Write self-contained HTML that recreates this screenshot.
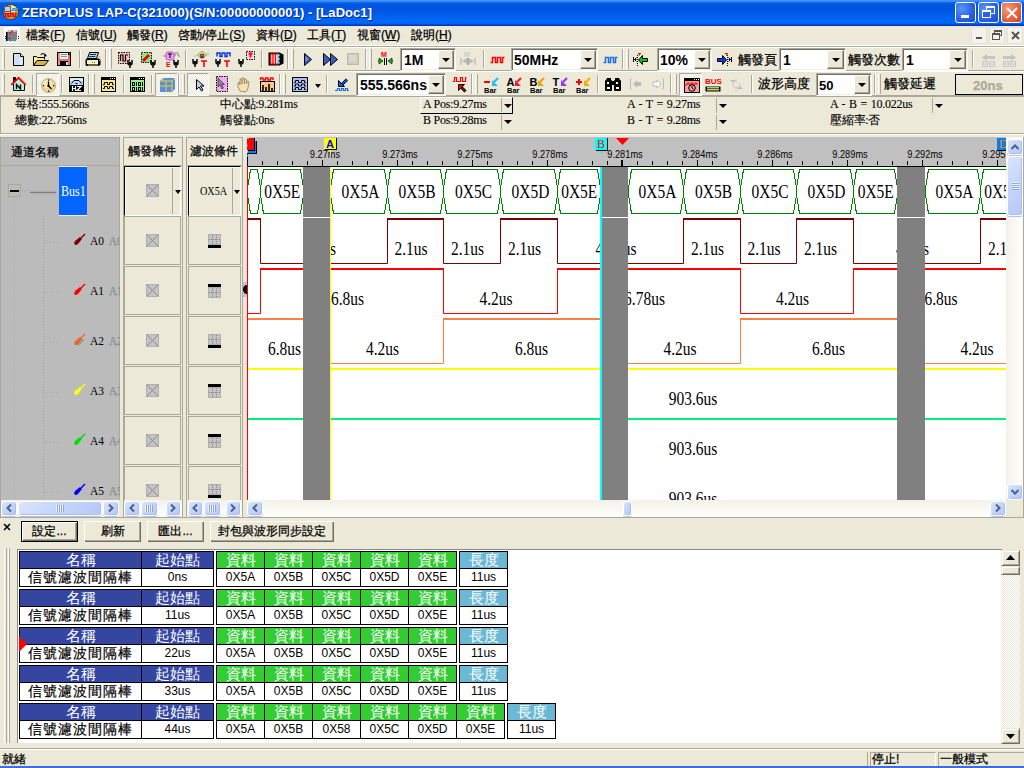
<!DOCTYPE html>
<html><head><meta charset="utf-8">
<style>
*{margin:0;padding:0;box-sizing:border-box}
html,body{width:1024px;height:768px;overflow:hidden;background:#ECE9D8}
body{font-family:"Liberation Sans",sans-serif;font-size:12px;color:#000;position:relative}
.a{position:absolute}
svg.a{overflow:visible}
.t{position:absolute;white-space:nowrap;line-height:1;-webkit-text-stroke:0.25px currentColor}
.sf{font-family:"Liberation Serif",serif}
.tbtn{position:absolute;top:2px;width:21px;height:21px;border:1px solid #fff;border-radius:3px;background:radial-gradient(circle at 30% 30%,#5a95f8,#2a5ee3 60%,#1c4ad0)}
.cbtn{position:absolute;background:#ECE9D8;border-top:1px solid #fff;border-left:1px solid #fff;border-right:1px solid #716f64;border-bottom:1px solid #716f64;box-shadow:inset -1px -1px 0 #aca899}
.cbtn:after{content:"";position:absolute;left:50%;top:50%;margin-left:-4px;margin-top:-2px;border-left:4px solid transparent;border-right:4px solid transparent;border-top:4px solid #000}
.sb{position:absolute;border:1px solid #fff;border-radius:2px;background:linear-gradient(135deg,#c8d8fd,#b4c8f6);box-shadow:inset -1px -1px 0 #a0b4e4}

</style></head><body>
<div class="a" style="left:0px;top:0px;width:1024px;height:26px;background:linear-gradient(#4a94f8 0px,#3a88f6 1.5px,#0a6cf2 2.5px,#0058e2 4px,#0054e0 8px,#005ae8 13px,#0064f2 18px,#0068f8 22px,#0062f0 23.5px,#0040c8 25px,#0030b0 26px)"></div>
<svg class="a" style="left:2px;top:4px;" width="17" height="16" viewBox="0 0 17 16"><ellipse cx="8.8" cy="8" rx="7.8" ry="7.5" fill="#d8a830" stroke="#303010" stroke-width=".8"/><ellipse cx="9.5" cy="5" rx="5" ry="3.5" fill="#f8e8a0"/><rect x="2" y="2" width="7" height="8" fill="#606060"/><rect x="3" y="3" width="5" height="4" fill="#c8c8f8"/><rect x="3" y="8" width="5" height="1" fill="#c0f0c0"/><path d="M9 6.5h2v-2h2v2h2v-2h1.5" stroke="#1090f0" stroke-width="1.2" fill="none"/><path d="M1 12.5h2.5v-3h2.5v3h2.5v-3h2.5v3h2.5v-3h1.5" stroke="#f00000" stroke-width="1.6" fill="none"/></svg>
<div class="t" style="left:22px;top:6px;font-size:13px;color:#fff;font-weight:bold;letter-spacing:0.05px;text-shadow:1px 1px 0 #0a2a90;-webkit-text-stroke:0">ZEROPLUS LAP-C(321000)(S/N:00000000001) - [LaDoc1]</div>
<div class="tbtn" style="left:955px"><div class="a" style="left:5px;top:12px;width:8px;height:3px;background:#fff"></div></div>
<div class="tbtn" style="left:978px"><div class="a" style="left:7px;top:3px;width:9px;height:8px;border:1px solid #fff;border-top-width:2px"></div><div class="a" style="left:3px;top:7px;width:9px;height:8px;border:1px solid #fff;border-top-width:2px;background:#2a60e4"></div></div>
<div class="tbtn" style="left:1001px;background:radial-gradient(circle at 30% 30%,#f49a78,#e4603a 60%,#cc4420)"><svg class="a" style="left:4px;top:4px" width="12" height="12"><path d="M1 1L11 11M11 1L1 11" stroke="#fff" stroke-width="2"/></svg></div>
<div class="a" style="left:0px;top:26px;width:1024px;height:19px;background:#ECE9D8"></div>
<div class="a" style="left:0px;top:45px;width:1024px;height:1px;background:#fff"></div>
<div class="a" style="left:0px;top:46px;width:1024px;height:1px;background:#aca899"></div>
<div class="a" style="left:0px;top:47px;width:1024px;height:1px;background:#fff"></div>
<div class="a" style="left:4px;top:27px;width:16px;height:16px;background:#fff"></div>
<svg class="a" style="left:4px;top:27px;" width="16" height="16" viewBox="0 0 16 16"><path d="M3 5l2-2h8v9l-1 2H3z" fill="#808080"/><path d="M5 3h8l-1 2H3z" fill="#c0c0c0"/><rect x="2" y="5" width="1.5" height="9" fill="#000"/><circle cx="6" cy="6" r="1" fill="#f00"/><circle cx="8" cy="4.5" r="1" fill="#f00"/><g fill="#00008b"><rect x="1" y="9" width="1" height="1"/><rect x="1" y="11" width="1" height="1"/><rect x="14" y="9" width="1" height="1"/><rect x="14" y="11" width="1" height="1"/><rect x="5" y="11" width="1" height="1"/></g><g fill="#0ff"><rect x="1" y="14" width="1" height="1"/><rect x="6" y="14" width="1" height="1"/><rect x="10" y="14" width="1" height="1"/><rect x="14" y="14" width="1" height="1"/></g></svg>
<div class="t" style="left:26px;top:29px;font-size:12px;color:#000;">檔案(<u>F</u>)</div>
<div class="t" style="left:76px;top:29px;font-size:12px;color:#000;">信號(<u>U</u>)</div>
<div class="t" style="left:127px;top:29px;font-size:12px;color:#000;">觸發(<u>R</u>)</div>
<div class="t" style="left:178px;top:29px;font-size:12px;color:#000;">啓動/停止(<u>S</u>)</div>
<div class="t" style="left:256px;top:29px;font-size:12px;color:#000;">資料(<u>D</u>)</div>
<div class="t" style="left:307px;top:29px;font-size:12px;color:#000;">工具(<u>T</u>)</div>
<div class="t" style="left:357px;top:29px;font-size:12px;color:#000;">視窗(<u>W</u>)</div>
<div class="t" style="left:411px;top:29px;font-size:12px;color:#000;">說明(<u>H</u>)</div>
<div class="a" style="left:971px;top:27px;width:16px;height:17px;background:#f4f2ea;border:1px solid #e6e3d6;border-radius:2px"></div>
<div class="a" style="left:989px;top:27px;width:16px;height:17px;background:#f4f2ea;border:1px solid #e6e3d6;border-radius:2px"></div>
<div class="a" style="left:1007px;top:27px;width:16px;height:17px;background:#f4f2ea;border:1px solid #e6e3d6;border-radius:2px"></div>
<div class="a" style="left:976px;top:37px;width:6px;height:2px;background:#555"></div>
<div class="a" style="left:994px;top:30px;width:8px;height:6px;border:1px solid #555;border-top-width:2px"></div>
<div class="a" style="left:992px;top:33px;width:8px;height:7px;border:1px solid #555;border-top-width:2px;background:#f4f2ea"></div>
<svg class="a" style="left:1011px;top:31px;" width="9" height="9" viewBox="0 0 9 9"><path d="M1 1L8 8M8 1L1 8" stroke="#555" stroke-width="2"/></svg>
<div class="a" style="left:0px;top:70px;width:1024px;height:1px;background:#aca899"></div>
<div class="a" style="left:0px;top:71px;width:1024px;height:1px;background:#fff"></div>
<div class="a" style="left:0px;top:95px;width:1024px;height:1px;background:#aca899"></div>
<div class="a" style="left:2px;top:49px;width:1px;height:20px;background:#fff"></div>
<div class="a" style="left:4px;top:49px;width:1px;height:20px;background:#aca899"></div>
<svg class="a" style="left:13px;top:53px;" width="11" height="13" viewBox="0 0 11 13"><path d="M0.5 0.5h7l3 3v9h-10z" fill="#dfe8fb" stroke="#000"/><path d="M1.5 1.5h5v10h-5z" fill="#c2d3f5" opacity=".6"/><path d="M7.5 0.5v3h3" fill="#fff" stroke="#000"/></svg>
<svg class="a" style="left:33px;top:52px;" width="16" height="14" viewBox="0 0 16 14"><path d="M0.5 13.5V4.5h3l1 1h7v3" fill="#f8e070" stroke="#000"/><path d="M1.5 12V6h2l1 1h7v1.5h-7z" fill="#fff4b0"/><path d="M0.5 13.5l3.5-5h11.5l-4 5z" fill="#cdb848" stroke="#000"/><path d="M7.5 2.5q2.5-2 5 0" stroke="#000" fill="none"/><path d="M11.5 1.5l2.5 2.5-3 1z" fill="#000"/></svg>
<svg class="a" style="left:57px;top:52px;" width="14" height="14" viewBox="0 0 14 14"><rect x="0" y="0" width="14" height="14" fill="#000"/><rect x="1" y="1" width="2" height="12" fill="#f09080"/><rect x="11" y="3" width="2" height="10" fill="#f07060"/><rect x="3" y="1" width="8" height="6" fill="#d8f0fc"/><path d="M4 2.5h6M4 4.5h6" stroke="#909090"/><rect x="1" y="7" width="12" height="2" fill="#f07060"/><rect x="3" y="9" width="8" height="4" fill="#000"/><rect x="9" y="10" width="2" height="3" fill="#b0e0f8"/><rect x="12" y="1" width="1" height="1" fill="#888"/></svg>
<div class="a" style="left:79px;top:50px;width:1px;height:18px;background:#aca899"></div>
<div class="a" style="left:80px;top:50px;width:1px;height:18px;background:#fff"></div>
<svg class="a" style="left:85px;top:52px;" width="16" height="14" viewBox="0 0 16 14"><path d="M4.5 0.5h9l-2 6h-9z" fill="#a8d8f8" stroke="#000"/><path d="M5 2.5h6M4.3 4.5h6" stroke="#000" stroke-width=".8"/><path d="M1.5 6.5h12.5l1.5 1.5v4.5l-1.5 1.5h-12.5l-1-1v-5z" fill="#000"/><rect x="2" y="8" width="11" height="2" fill="#f4ecc0"/><rect x="2" y="10" width="11" height="2" fill="#fff8d8"/><rect x="3" y="12.5" width="10" height="1" fill="#d8c870"/><rect x="7" y="10" width="1" height="1" fill="#0c0"/><rect x="9" y="10" width="1" height="1" fill="#f00"/><path d="M13.5 6l2-2M14 9l1.5-1.5" stroke="#c8b860"/></svg>
<div class="a" style="left:105px;top:49px;width:1px;height:20px;background:#aca899"></div>
<div class="a" style="left:106px;top:49px;width:1px;height:20px;background:#fff"></div>
<div class="a" style="left:109px;top:49px;width:1px;height:20px;background:#fff"></div>
<div class="a" style="left:111px;top:49px;width:1px;height:20px;background:#aca899"></div>
<svg class="a" style="left:118px;top:52px;" width="16" height="16" viewBox="0 0 16 16"><rect x="0.5" y="0.5" width="11" height="11" fill="#f8c0b8" stroke="#000" stroke-dasharray="1.5 1"/><path d="M2.5 9v-6h2.5v6h2.5v-6h2.5" stroke="#000" stroke-width="1.2" fill="none"/><path d="M10 8v3q0 2 2 2q2 0 2-2v-3M12 13v3" stroke="#000" stroke-width="1.5" fill="none"/><rect x="11" y="10" width="2" height="2" fill="#000"/></svg>
<svg class="a" style="left:141px;top:52px;" width="16" height="16" viewBox="0 0 16 16"><rect x="0.5" y="0.5" width="10" height="10" fill="#88e888" stroke="#000" stroke-dasharray="1.5 1"/><path d="M2 9l6-6" stroke="#f00" stroke-width="3"/><path d="M10 8v3q0 2 2 2q2 0 2-2v-3M12 13v3" stroke="#000" stroke-width="1.5" fill="none"/><rect x="11" y="10" width="2" height="2" fill="#000"/></svg>
<svg class="a" style="left:163px;top:51px;" width="17" height="17" viewBox="0 0 17 17"><path d="M0 5h3M11 5h1v-3h3v3h2" stroke="#888" fill="none"/><rect x="3" y="1" width="8" height="8" rx="2" fill="#e8a0f0" stroke="#c050d0"/><path d="M5 3h4M7 3v4" stroke="#000"/><text x="3" y="16" font-size="7" font-weight="bold" fill="#f00" font-family="Liberation Sans">E</text><path d="M11 9v3q0 2 2 2q2 0 2-2v-3M13 14v3" stroke="#000" stroke-width="1.5" fill="none"/><rect x="12" y="11" width="2" height="2" fill="#000"/></svg>
<div class="a" style="left:185px;top:50px;width:1px;height:18px;background:#aca899"></div>
<div class="a" style="left:186px;top:50px;width:1px;height:18px;background:#fff"></div>
<svg class="a" style="left:193px;top:51px;" width="16" height="17" viewBox="0 0 16 17"><path d="M4 4l5-4 5 4-5 4z" fill="#e8c860" stroke="#aaa"/><text x="7" y="7" font-size="6" font-weight="bold" font-family="Liberation Sans">B</text><path d="M1 5h2M14 3h2" stroke="#aaa"/><path d="M0 8v3q0 2 2 2q2 0 2-2v-3M2 13v3" stroke="#000" stroke-width="1.5" fill="none"/><rect x="1" y="10" width="2" height="2" fill="#000"/><path d="M8 10h6M11 10v6" stroke="#f00" stroke-width="1.6"/></svg>
<svg class="a" style="left:216px;top:51px;" width="16" height="17" viewBox="0 0 16 17"><path d="M1 5.5V2H4V5.5H6V2H9V5.5H11V2H14V5.5" stroke="#0030f0" stroke-width="1.4" fill="none"/><path d="M0 8v3q0 2 2 2q2 0 2-2v-3M2 13v3" stroke="#000" stroke-width="1.5" fill="none"/><rect x="1" y="10" width="2" height="2" fill="#000"/><path d="M8 10h6M11 10v6" stroke="#f00" stroke-width="1.6"/></svg>
<svg class="a" style="left:239px;top:51px;" width="16" height="17" viewBox="0 0 16 17"><rect x="7.5" y="0.5" width="8" height="8" fill="#fdd" stroke="#000" stroke-dasharray="1.5 1"/><path d="M9.5 2.5h4M11.5 2.5v4" stroke="#f00" stroke-width="2"/><path d="M0 8v3q0 2 2 2q2 0 2-2v-3M2 13v3" stroke="#000" stroke-width="1.5" fill="none"/><rect x="1" y="10" width="2" height="2" fill="#000"/></svg>
<div class="a" style="left:261px;top:50px;width:1px;height:18px;background:#aca899"></div>
<div class="a" style="left:262px;top:50px;width:1px;height:18px;background:#fff"></div>
<svg class="a" style="left:268px;top:51px;" width="16" height="16" viewBox="0 0 16 16"><path d="M0.5 1.5h11l4 2v9l-4 2h-11z" fill="#000"/><rect x="2" y="3" width="8" height="10" fill="#fff"/><path d="M2.5 3v10M5 3v10M7.5 3v10" stroke="#f00" stroke-width="1.4"/><path d="M2 3h8M2 13h8" stroke="#f00"/><path d="M9 3q2 0 3 1l-1.5 2 1.5 2-1.5 2 1.5 2q-1 1-3 1" fill="#b0d0f0" stroke="#5080b0"/></svg>
<div class="a" style="left:287px;top:49px;width:1px;height:20px;background:#aca899"></div>
<div class="a" style="left:288px;top:49px;width:1px;height:20px;background:#fff"></div>
<div class="a" style="left:291px;top:49px;width:1px;height:20px;background:#fff"></div>
<div class="a" style="left:293px;top:49px;width:1px;height:20px;background:#aca899"></div>
<svg class="a" style="left:304px;top:53px;" width="8" height="13" viewBox="0 0 8 13"><path d="M0.5 0.5l7 6-7 6z" fill="#3c5cb8" stroke="#000"/><path d="M1.5 3l3 3.5-3 2z" fill="#7b9be0"/></svg>
<svg class="a" style="left:323px;top:53px;" width="16" height="13" viewBox="0 0 16 13"><path d="M0.5 0.5l7 6-7 6z" fill="#3c5cb8" stroke="#000"/><path d="M7.5 0.5l7 6-7 6z" fill="#3c5cb8" stroke="#000"/></svg>
<svg class="a" style="left:347px;top:53px;" width="12" height="12" viewBox="0 0 12 12"><rect x="0.5" y="0.5" width="11" height="11" fill="#cfcdc0" stroke="#bbb8a8"/><rect x="2" y="2" width="7" height="7" fill="#dad8cc"/></svg>
<div class="a" style="left:365px;top:49px;width:1px;height:20px;background:#aca899"></div>
<div class="a" style="left:366px;top:49px;width:1px;height:20px;background:#fff"></div>
<div class="a" style="left:369px;top:49px;width:1px;height:20px;background:#fff"></div>
<div class="a" style="left:371px;top:49px;width:1px;height:20px;background:#aca899"></div>
<svg class="a" style="left:377px;top:51px;" width="17" height="15" viewBox="0 0 17 15"><text x="4" y="6" font-size="7" font-weight="bold" fill="#f00" font-family="Liberation Sans">M</text><path d="M1 10h4M12 10h4" stroke="#000"/><path d="M6 10l-4-3v6z" fill="#0c0" stroke="#000" stroke-width=".6"/><path d="M11 10l4-3v6z" fill="#0c0" stroke="#000" stroke-width=".6"/><path d="M7.5 7v7M9.5 7v7" stroke="#000"/></svg>
<div class="a" style="left:400px;top:48px;width:56px;height:23px;background:#fff;border-top:1px solid #aca899;border-left:1px solid #aca899;border-right:1px solid #fff;border-bottom:1px solid #fff;box-shadow:inset 1px 1px 0 #716f64,inset -1px -1px 0 #f1efe2"></div>
<div class="cbtn" style="left:438px;top:50px;width:16px;height:19px"></div>
<div class="t" style="left:404px;top:53px;font-size:14px;color:#000;font-weight:bold;-webkit-text-stroke:0">1M</div>
<svg class="a" style="left:460px;top:51px;" width="16" height="15" viewBox="0 0 16 15"><text x="4" y="6" font-size="7" fill="#bbb" font-family="Liberation Sans">M</text><path d="M1 7v7M15 7v7" stroke="#aaa"/><path d="M2 10l5-3v6zM14 10l-5-3v6z" fill="#bbb"/><path d="M7.5 7v7M8.5 7v7" stroke="#aaa"/></svg>
<div class="a" style="left:483px;top:50px;width:1px;height:18px;background:#aca899"></div>
<div class="a" style="left:484px;top:50px;width:1px;height:18px;background:#fff"></div>
<svg class="a" style="left:490px;top:56px;" width="16" height="7" viewBox="0 0 16 7"><path d="M0.5 6.5h2v-5h3v5h2v-5h3v5h2v-5h2" stroke="#f00" stroke-width="1.5" fill="none"/></svg>
<div class="a" style="left:511px;top:48px;width:87px;height:23px;background:#fff;border-top:1px solid #aca899;border-left:1px solid #aca899;border-right:1px solid #fff;border-bottom:1px solid #fff;box-shadow:inset 1px 1px 0 #716f64,inset -1px -1px 0 #f1efe2"></div>
<div class="cbtn" style="left:580px;top:50px;width:16px;height:19px"></div>
<div class="t" style="left:514px;top:53px;font-size:14px;color:#000;font-weight:bold;-webkit-text-stroke:0">50MHz</div>
<svg class="a" style="left:603px;top:56px;" width="16" height="7" viewBox="0 0 16 7"><path d="M0.5 6.5h2v-5h3v5h2v-5h3v5h2v-5h2" stroke="#1a70f0" stroke-width="1.5" fill="none"/></svg>
<div class="a" style="left:622px;top:49px;width:1px;height:20px;background:#aca899"></div>
<div class="a" style="left:623px;top:49px;width:1px;height:20px;background:#fff"></div>
<div class="a" style="left:626px;top:49px;width:1px;height:20px;background:#fff"></div>
<div class="a" style="left:628px;top:49px;width:1px;height:20px;background:#aca899"></div>
<svg class="a" style="left:633px;top:52px;" width="16" height="14" viewBox="0 0 16 14"><path d="M4.5 3v11" stroke="#000" stroke-dasharray="1 1"/><path d="M5 1.5h3M6.5 1.5v2" stroke="#f00" stroke-width="1.2"/><path d="M0.5 5v5M0.5 7.5h3M3.5 5.5l-2 2 2 2" stroke="#000" fill="none"/><path d="M14.5 6.5h-5v-3l-4 4.5 4 4.5v-3h5z" fill="#00d000" stroke="#000"/></svg>
<div class="a" style="left:657px;top:48px;width:55px;height:23px;background:#fff;border-top:1px solid #aca899;border-left:1px solid #aca899;border-right:1px solid #fff;border-bottom:1px solid #fff;box-shadow:inset 1px 1px 0 #716f64,inset -1px -1px 0 #f1efe2"></div>
<div class="cbtn" style="left:694px;top:50px;width:16px;height:19px"></div>
<div class="t" style="left:660px;top:53px;font-size:14px;color:#000;font-weight:bold;-webkit-text-stroke:0">10%</div>
<svg class="a" style="left:717px;top:52px;" width="16" height="14" viewBox="0 0 16 14"><path d="M10.5 3v11" stroke="#000" stroke-dasharray="1 1"/><path d="M8 1.5h3M9.5 1.5v2" stroke="#f00" stroke-width="1.2"/><path d="M14.5 5v5M14.5 7.5h-3M11.5 5.5l2 2-2 2" stroke="#000" fill="none"/><path d="M0.5 6.5h5v-3l4 4.5-4 4.5v-3h-5z" fill="#0040ff" stroke="#000"/></svg>
<div class="t" style="left:738px;top:53px;font-size:13px;color:#000;">觸發頁</div>
<div class="a" style="left:779px;top:48px;width:67px;height:23px;background:#fff;border-top:1px solid #aca899;border-left:1px solid #aca899;border-right:1px solid #fff;border-bottom:1px solid #fff;box-shadow:inset 1px 1px 0 #716f64,inset -1px -1px 0 #f1efe2"></div>
<div class="cbtn" style="left:827px;top:50px;width:17px;height:19px"></div>
<div class="t" style="left:783px;top:53px;font-size:14px;color:#000;font-weight:bold;-webkit-text-stroke:0">1</div>
<div class="t" style="left:848px;top:53px;font-size:13px;color:#000;">觸發次數</div>
<div class="a" style="left:902px;top:48px;width:66px;height:23px;background:#fff;border-top:1px solid #aca899;border-left:1px solid #aca899;border-right:1px solid #fff;border-bottom:1px solid #fff;box-shadow:inset 1px 1px 0 #716f64,inset -1px -1px 0 #f1efe2"></div>
<div class="cbtn" style="left:949px;top:50px;width:17px;height:19px"></div>
<div class="t" style="left:906px;top:53px;font-size:14px;color:#000;font-weight:bold;-webkit-text-stroke:0">1</div>
<div class="a" style="left:972px;top:50px;width:1px;height:18px;background:#aca899"></div>
<div class="a" style="left:973px;top:50px;width:1px;height:18px;background:#fff"></div>
<svg class="a" style="left:981px;top:54px;" width="15" height="13" viewBox="0 0 15 13"><g ><path d="M1 3.5l5-3.5v2h8v3h-8v2z" fill="#c4c4c4"/><path d="M1.5 7.5h5v5h-5zM8.5 7.5h5v5h-5zM1.5 10h5M8.5 10h5" fill="none" stroke="#c4c4c4"/></g></svg>
<svg class="a" style="left:1002px;top:54px;" width="15" height="13" viewBox="0 0 15 13"><g transform="translate(15,0) scale(-1,1)"><path d="M1 3.5l5-3.5v2h8v3h-8v2z" fill="#c4c4c4"/><path d="M1.5 7.5h5v5h-5zM8.5 7.5h5v5h-5zM1.5 10h5M8.5 10h5" fill="none" stroke="#c4c4c4"/></g></svg>
<div class="a" style="left:2px;top:74px;width:1px;height:20px;background:#fff"></div>
<div class="a" style="left:4px;top:74px;width:1px;height:20px;background:#aca899"></div>
<svg class="a" style="left:11px;top:77px;" width="15" height="14" viewBox="0 0 15 14"><path d="M2.5 7V0.5H4.5V4" fill="#000" stroke="#000"/><path d="M2.5 6v7.5h11V6.5L8 1z" fill="#a8f4e0" stroke="#000"/><path d="M0.3 7.8L7.5 0.8L14.7 7.8" stroke="#f00" stroke-width="1.7" fill="none"/><path d="M5.5 12V7.5l4 4.5V7.5" stroke="#000" stroke-width="1.4" fill="none"/></svg>
<div class="a" style="left:32px;top:75px;width:1px;height:18px;background:#aca899"></div>
<div class="a" style="left:33px;top:75px;width:1px;height:18px;background:#fff"></div>
<div class="a" style="left:36px;top:73px;width:23px;height:23px;background:repeating-conic-gradient(#ece9d8 0 25%,#fefefe 0 50%) 0 0/2px 2px;border-top:1px solid #aca899;border-left:1px solid #aca899;border-bottom:1px solid #fff;border-right:1px solid #fff"></div>
<svg class="a" style="left:41px;top:78px;" width="15" height="15" viewBox="0 0 15 15"><circle cx="7.5" cy="7.5" r="7" fill="#f0d490" stroke="#b0a070" stroke-width=".8"/><ellipse cx="6.5" cy="6" rx="5" ry="4" fill="#f8ecc8" opacity=".8"/><path d="M7.5 3.5v4.5M7.5 8l3 3" stroke="#000" stroke-width="1.3" fill="none"/><rect x="6.5" y="7" width="2" height="2" fill="#000"/><rect x="7" y="1.5" width="1.2" height="1.2" fill="#000"/><rect x="7" y="12.5" width="1.2" height="1.2" fill="#000"/><rect x="2" y="7" width="1.2" height="1.2" fill="#000"/><rect x="12" y="7" width="1.2" height="1.2" fill="#000"/></svg>
<div class="a" style="left:61px;top:75px;width:1px;height:18px;background:#aca899"></div>
<div class="a" style="left:62px;top:75px;width:1px;height:18px;background:#fff"></div>
<svg class="a" style="left:69px;top:77px;" width="15" height="15" viewBox="0 0 15 15"><rect x="0" y="0" width="15" height="15" fill="#000"/><rect x="1" y="1" width="13" height="7" fill="#b8d8f8"/><rect x="1" y="1" width="13" height="3" fill="#d8ecfc"/><path d="M2.5 6.5L5 3.5H10L12.5 6.5" stroke="#000" fill="none"/><rect x="6.5" y="6" width="2" height="1" fill="#000"/><path d="M3.5 9v5M6.5 9v5M3.5 11.5h3M8 9.5h4l-4 4h4" stroke="#fff" stroke-width="1.2" fill="none"/></svg>
<div class="a" style="left:88px;top:74px;width:1px;height:20px;background:#aca899"></div>
<div class="a" style="left:89px;top:74px;width:1px;height:20px;background:#fff"></div>
<div class="a" style="left:92px;top:74px;width:1px;height:20px;background:#fff"></div>
<div class="a" style="left:94px;top:74px;width:1px;height:20px;background:#aca899"></div>
<svg class="a" style="left:101px;top:77px;" width="15" height="15" viewBox="0 0 15 15"><rect x="0.5" y="0.5" width="14" height="14" fill="#f8e490" stroke="#000"/><rect x="0" y="0" width="15" height="3" fill="#000"/><rect x="9" y="1" width="1" height="1" fill="#fff"/><rect x="11" y="1" width="1" height="1" fill="#fff"/><rect x="13" y="1" width="1" height="1" fill="#fff"/><path d="M2 7.5H3.5V5.5H6.5V7.5H8.5V5.5H11.5V7.5H13M2 11.5H3.5V9.5H6.5V11.5H8.5V9.5H11.5V11.5H13" stroke="#000" stroke-width="1" fill="none"/></svg>
<div class="a" style="left:123px;top:75px;width:1px;height:18px;background:#aca899"></div>
<div class="a" style="left:124px;top:75px;width:1px;height:18px;background:#fff"></div>
<svg class="a" style="left:130px;top:77px;" width="15" height="15" viewBox="0 0 15 15"><rect x="0.5" y="0.5" width="14" height="14" fill="#98f090" stroke="#000"/><rect x="0" y="0" width="15" height="3" fill="#000"/><rect x="9" y="1" width="1" height="1" fill="#fff"/><rect x="11" y="1" width="1" height="1" fill="#fff"/><rect x="13" y="1" width="1" height="1" fill="#fff"/><rect x="2.5" y="5.5" width="2" height="3" fill="none" stroke="#000"/><rect x="6" y="5" width="1" height="4" fill="#000"/><rect x="8.5" y="5.5" width="2" height="3" fill="none" stroke="#000"/><rect x="12" y="5" width="1" height="4" fill="#000"/><rect x="2.5" y="10.5" width="2" height="3" fill="none" stroke="#000"/><rect x="6" y="10" width="1" height="4" fill="#000"/><rect x="8.5" y="10.5" width="2" height="3" fill="none" stroke="#000"/><rect x="12" y="10" width="1" height="4" fill="#000"/></svg>
<div class="a" style="left:151px;top:75px;width:1px;height:18px;background:#aca899"></div>
<div class="a" style="left:152px;top:75px;width:1px;height:18px;background:#fff"></div>
<div class="a" style="left:155px;top:73px;width:23px;height:23px;background:repeating-conic-gradient(#ece9d8 0 25%,#fefefe 0 50%) 0 0/2px 2px;border-top:1px solid #aca899;border-left:1px solid #aca899;border-bottom:1px solid #fff;border-right:1px solid #fff"></div>
<svg class="a" style="left:160px;top:78px;" width="15" height="15" viewBox="0 0 15 15"><path d="M0 3l3-3h12v11l-3 3h-12z" fill="#5890e0"/><path d="M0 3h12v12M3 0v3M0 8h12M6 3v12M12 3l3-3" stroke="#f0d020" fill="none"/></svg>
<div class="a" style="left:178px;top:74px;width:1px;height:20px;background:#aca899"></div>
<div class="a" style="left:179px;top:74px;width:1px;height:20px;background:#fff"></div>
<div class="a" style="left:182px;top:74px;width:1px;height:20px;background:#fff"></div>
<div class="a" style="left:184px;top:74px;width:1px;height:20px;background:#aca899"></div>
<div class="a" style="left:187px;top:73px;width:22px;height:23px;background:repeating-conic-gradient(#ece9d8 0 25%,#fefefe 0 50%) 0 0/2px 2px;border-top:1px solid #aca899;border-left:1px solid #aca899;border-bottom:1px solid #fff;border-right:1px solid #fff"></div>
<svg class="a" style="left:196px;top:79px;" width="8" height="13" viewBox="0 0 8 13"><path d="M0.5 0.5v10l2.5-2.5 2.5 4 1.5-1-2.5-4h3.5z" fill="#c0d0f8" stroke="#000"/></svg>
<svg class="a" style="left:216px;top:76px;" width="12" height="16" viewBox="0 0 12 16"><rect x="0.5" y="0.5" width="11" height="15" fill="#f8a8f8" stroke="#000" stroke-dasharray="1.5 1"/><path d="M2 2v9l2-2 2 4 1.5-1-2-3.5h3z" fill="#888" stroke="#222" stroke-width=".6"/></svg>
<svg class="a" style="left:237px;top:77px;" width="16" height="15" viewBox="0 0 16 15"><path d="M3 14q-3-4-2-8l1-1 1 3v-6h1.5l.5 5v-6h2l.5 6v-5h1.5l.5 5 1-3 1.5 1-1 6q-1 4-3 4z" fill="#f8e0b0" stroke="#a09070"/></svg>
<svg class="a" style="left:260px;top:77px;" width="15" height="15" viewBox="0 0 15 15"><path d="M0.5 3v-2h2.5v2h2.5v-2h2.5v2h2.5v-2h2.5v2" stroke="#f00" stroke-width="1.4" fill="none"/><rect x="0.5" y="4.5" width="14" height="10" fill="#f8c890" stroke="#000"/><path d="M3 14v-6M6 14v-4M9 14v-7M12 14v-3" stroke="#000" stroke-width="1.6"/></svg>
<div class="a" style="left:279px;top:74px;width:1px;height:20px;background:#aca899"></div>
<div class="a" style="left:280px;top:74px;width:1px;height:20px;background:#fff"></div>
<div class="a" style="left:283px;top:74px;width:1px;height:20px;background:#fff"></div>
<div class="a" style="left:285px;top:74px;width:1px;height:20px;background:#aca899"></div>
<svg class="a" style="left:292px;top:77px;" width="16" height="15" viewBox="0 0 16 15"><rect x="0.5" y="0.5" width="15" height="14" fill="#a8c0f8" stroke="#000"/><path d="M2 5.5H3.5V3.5H6.5V5.5H9.5V3.5H12.5V5.5H14M2 9H3.5V7H6.5V9H9.5V7H12.5V9H14M2 12.5H3.5V10.5H6.5V12.5H9.5V10.5H12.5V12.5H14" stroke="#000" stroke-width="1" fill="none"/></svg>
<svg class="a" style="left:315px;top:84px;" width="6" height="4" viewBox="0 0 6 4"><path d="M0 0h6l-3 4z"/></svg>
<div class="a" style="left:326px;top:75px;width:1px;height:18px;background:#aca899"></div>
<div class="a" style="left:327px;top:75px;width:1px;height:18px;background:#fff"></div>
<svg class="a" style="left:334px;top:78px;" width="15" height="13" viewBox="0 0 15 13"><path d="M1 12.5H3.5V10.5H5.5V12.5H7.5V10.5H9.5V12.5H11.5V10.5H13.5V12.5H15" stroke="#1a70f0" stroke-width="1.2" fill="none"/><path d="M13 1.5l-5 5" stroke="#000" stroke-width="3"/><path d="M13 1.5l-5 5" stroke="#1060f0" stroke-width="1.4"/><path d="M4.5 2.5v6h6z" fill="#1060f0" stroke="#000"/></svg>
<div class="a" style="left:356px;top:73px;width:90px;height:23px;background:#fff;border-top:1px solid #aca899;border-left:1px solid #aca899;border-right:1px solid #fff;border-bottom:1px solid #fff;box-shadow:inset 1px 1px 0 #716f64,inset -1px -1px 0 #f1efe2"></div>
<div class="cbtn" style="left:428px;top:75px;width:16px;height:19px"></div>
<div class="t" style="left:360px;top:78px;font-size:14px;color:#000;font-weight:bold;-webkit-text-stroke:0">555.566ns</div>
<svg class="a" style="left:452px;top:76px;" width="15" height="16" viewBox="0 0 15 16"><path d="M0.5 5.5H2.5V1.5H4.5V5.5H8.5V1.5H10.5V5.5H13.5V1.5H14.5" stroke="#f00" stroke-width="1.2" fill="none"/><path d="M9.5 11.5l4 4" stroke="#000" stroke-width="3"/><path d="M9.5 11.5l3.5 3.5" stroke="#f00" stroke-width="1"/><path d="M6.5 8.5h6l-6 6z" fill="#f00" stroke="#000"/></svg>
<div class="a" style="left:471px;top:74px;width:1px;height:20px;background:#aca899"></div>
<div class="a" style="left:472px;top:74px;width:1px;height:20px;background:#fff"></div>
<div class="a" style="left:475px;top:74px;width:1px;height:20px;background:#fff"></div>
<div class="a" style="left:477px;top:74px;width:1px;height:20px;background:#aca899"></div>
<svg class="a" style="left:484px;top:77px;" width="15" height="16" viewBox="0 0 15 16"><path d="M0 5h6" stroke="#f00" stroke-width="2"/><path d="M14 1L10 5" stroke="#20c0f0" stroke-width="2.2"/><path d="M8 3v6h6z" fill="#20c0f0"/><text x="0" y="15.5" font-size="7.5" font-weight="bold" font-family="Liberation Sans" fill="#000" transform="scale(1 1)">Bar</text></svg>
<svg class="a" style="left:507px;top:77px;" width="15" height="16" viewBox="0 0 15 16"><text x="-0.5" y="9" font-size="11" font-weight="bold" font-family="Liberation Sans">A</text><path d="M14 1L10 5" stroke="#f02020" stroke-width="2.2"/><path d="M8 3v6h6z" fill="#f02020"/><text x="0" y="15.5" font-size="7.5" font-weight="bold" font-family="Liberation Sans" fill="#000" transform="scale(1 1)">Bar</text></svg>
<svg class="a" style="left:530px;top:77px;" width="15" height="16" viewBox="0 0 15 16"><text x="-0.5" y="9" font-size="11" font-weight="bold" font-family="Liberation Sans">B</text><path d="M14 1L10 5" stroke="#f0a000" stroke-width="2.2"/><path d="M8 3v6h6z" fill="#f0a000"/><text x="0" y="15.5" font-size="7.5" font-weight="bold" font-family="Liberation Sans" fill="#000" transform="scale(1 1)">Bar</text></svg>
<svg class="a" style="left:553px;top:77px;" width="15" height="16" viewBox="0 0 15 16"><text x="-0.5" y="9" font-size="11" font-weight="bold" font-family="Liberation Sans">T</text><path d="M14 1L10 5" stroke="#a030f0" stroke-width="2.2"/><path d="M8 3v6h6z" fill="#a030f0"/><text x="0" y="15.5" font-size="7.5" font-weight="bold" font-family="Liberation Sans" fill="#000" transform="scale(1 1)">Bar</text></svg>
<svg class="a" style="left:576px;top:77px;" width="15" height="16" viewBox="0 0 15 16"><path d="M0 5h6M3 2v6" stroke="#f00" stroke-width="2"/><path d="M14 1L10 5" stroke="#f0b000" stroke-width="2.2"/><path d="M8 3v6h6z" fill="#f0b000"/><text x="0" y="15.5" font-size="7.5" font-weight="bold" font-family="Liberation Sans" fill="#000" transform="scale(1 1)">Bar</text></svg>
<div class="a" style="left:597px;top:75px;width:1px;height:18px;background:#aca899"></div>
<div class="a" style="left:598px;top:75px;width:1px;height:18px;background:#fff"></div>
<svg class="a" style="left:605px;top:77px;" width="16" height="14" viewBox="0 0 16 14"><path d="M1 3h5v-2h-4zM10 1h4l1 2h-5z" fill="#000"/><rect x="0" y="3" width="7" height="11" rx="1" fill="#000"/><rect x="9" y="3" width="7" height="11" rx="1" fill="#000"/><rect x="6" y="4" width="4" height="4" fill="#000"/><rect x="2" y="5" width="2" height="2" fill="#fff"/><rect x="11" y="5" width="2" height="2" fill="#fff"/><rect x="2" y="10" width="3" height="2" fill="#fff"/><rect x="11" y="10" width="3" height="2" fill="#fff"/></svg>
<svg class="a" style="left:629px;top:78px;" width="13" height="12" viewBox="0 0 13 12"><path d="M2.5 1h-1v10h1" stroke="#bbb" fill="none"/><path d="M4 6l4-4v2h4v4h-4v2z" fill="#bbb"/></svg>
<svg class="a" style="left:652px;top:78px;" width="13" height="12" viewBox="0 0 13 12"><path d="M10.5 1h1v10h-1" stroke="#bbb" fill="none"/><path d="M9 6l-4-4v2h-4v4h4v2z" fill="#fff" stroke="#bbb"/></svg>
<div class="a" style="left:670px;top:74px;width:1px;height:20px;background:#aca899"></div>
<div class="a" style="left:671px;top:74px;width:1px;height:20px;background:#fff"></div>
<div class="a" style="left:674px;top:74px;width:1px;height:20px;background:#fff"></div>
<div class="a" style="left:676px;top:74px;width:1px;height:20px;background:#aca899"></div>
<div class="a" style="left:679px;top:73px;width:23px;height:23px;background:repeating-conic-gradient(#ece9d8 0 25%,#fefefe 0 50%) 0 0/2px 2px;border-top:1px solid #aca899;border-left:1px solid #aca899;border-bottom:1px solid #fff;border-right:1px solid #fff"></div>
<svg class="a" style="left:684px;top:78px;" width="16" height="15" viewBox="0 0 16 15"><rect x="0.5" y="0.5" width="15" height="14" fill="#f8a0a0" stroke="#000"/><rect x="0" y="0" width="16" height="3" fill="#000"/><path d="M10 1.5h1M12 1.5h1M14 1.5h1" stroke="#fff"/><path d="M1 7h2v-2h2v2h2v-2h2v2h2v-2h2v2" stroke="#f00" fill="none"/><circle cx="8" cy="10" r="3.3" fill="none" stroke="#000"/><path d="M8 8v2l1.5 1" stroke="#000" fill="none"/></svg>
<svg class="a" style="left:705px;top:77px;" width="16" height="15" viewBox="0 0 16 15"><text x="0" y="7" font-size="8" font-weight="bold" fill="#f00" font-family="Liberation Sans">BUS</text><rect x="0.5" y="9.5" width="15" height="5" fill="#000"/><rect x="2" y="10" width="12" height="1.5" fill="#80e080"/><rect x="2" y="12" width="12" height="1.5" fill="#f0c040"/></svg>
<svg class="a" style="left:730px;top:78px;" width="13" height="14" viewBox="0 0 13 14"><path d="M3 5l-3-3h6z" fill="#bbb"/><path d="M10 8l-3 3h6z" fill="#bbb"/><path d="M3 5v4h7v-4M6 0v5M6 9v5" stroke="#ccc" fill="none"/></svg>
<div class="a" style="left:751px;top:75px;width:1px;height:18px;background:#aca899"></div>
<div class="a" style="left:752px;top:75px;width:1px;height:18px;background:#fff"></div>
<div class="t" style="left:758px;top:77px;font-size:13px;color:#000;">波形高度</div>
<div class="a" style="left:816px;top:73px;width:56px;height:23px;background:#fff;border-top:1px solid #aca899;border-left:1px solid #aca899;border-right:1px solid #fff;border-bottom:1px solid #fff;box-shadow:inset 1px 1px 0 #716f64,inset -1px -1px 0 #f1efe2"></div>
<div class="cbtn" style="left:854px;top:75px;width:16px;height:19px"></div>
<div class="t" style="left:819px;top:79px;font-size:13px;color:#000;font-weight:bold;-webkit-text-stroke:0">50</div>
<div class="a" style="left:874px;top:74px;width:1px;height:20px;background:#aca899"></div>
<div class="a" style="left:875px;top:74px;width:1px;height:20px;background:#fff"></div>
<div class="a" style="left:878px;top:74px;width:1px;height:20px;background:#fff"></div>
<div class="a" style="left:880px;top:74px;width:1px;height:20px;background:#aca899"></div>
<div class="t" style="left:884px;top:77px;font-size:13px;color:#000;">觸發延遲</div>
<div class="a" style="left:955px;top:74px;width:68px;height:21px;border:1px solid #000;background:#ECE9D8"></div>
<div class="t" style="left:973px;top:79px;font-size:13px;color:#aca899;font-weight:bold">20ns</div>
<div class="a" style="left:0px;top:96px;width:1024px;height:38px;border-top:1px solid #aca899;border-left:1px solid #aca899;border-bottom:1px solid #aca899;background:#ECE9D8"></div>
<div class="a" style="left:0px;top:134px;width:1024px;height:1px;background:#fff"></div>
<div class="t" style="left:15px;top:98px;font-size:12px;color:#000;font-family:'Liberation Serif',serif;letter-spacing:-0.25px;-webkit-text-stroke:0.1px #000">每格:555.566ns</div>
<div class="t" style="left:15px;top:114px;font-size:12px;color:#000;font-family:'Liberation Serif',serif;letter-spacing:-0.25px;-webkit-text-stroke:0.1px #000">總數:22.756ms</div>
<div class="t" style="left:220px;top:98px;font-size:12px;color:#000;font-family:'Liberation Serif',serif;letter-spacing:-0.25px;-webkit-text-stroke:0.1px #000">中心點:9.281ms</div>
<div class="t" style="left:220px;top:114px;font-size:12px;color:#000;font-family:'Liberation Serif',serif;letter-spacing:-0.25px;-webkit-text-stroke:0.1px #000">觸發點:0ns</div>
<div class="a" style="left:420px;top:97px;width:93px;height:17px;border-right:1px solid #000;border-bottom:1px solid #000;border-top:1px solid #fff;border-left:1px solid #fff"></div>
<div class="t" style="left:423px;top:98px;font-size:12px;color:#000;font-family:'Liberation Serif',serif;letter-spacing:-0.25px;-webkit-text-stroke:0.1px #000">A Pos:9.27ms</div>
<div class="a" style="left:501px;top:98px;width:1px;height:14px;background:#aca899"></div>
<svg class="a" style="left:504px;top:104px;" width="8" height="4" viewBox="0 0 8 4"><path d="M0 0h8l-4 4z"/></svg>
<div class="t" style="left:423px;top:114px;font-size:12px;color:#000;font-family:'Liberation Serif',serif;letter-spacing:-0.25px;-webkit-text-stroke:0.1px #000">B Pos:9.28ms</div>
<div class="a" style="left:501px;top:115px;width:1px;height:15px;background:#aca899"></div>
<svg class="a" style="left:504px;top:120px;" width="8" height="4" viewBox="0 0 8 4"><path d="M0 0h8l-4 4z"/></svg>
<div class="t" style="left:627px;top:98px;font-size:12px;color:#000;font-family:'Liberation Serif',serif;letter-spacing:-0.25px;-webkit-text-stroke:0.1px #000;word-spacing:1px">A - T = 9.27ms</div>
<div class="a" style="left:716px;top:98px;width:1px;height:15px;background:#aca899"></div>
<svg class="a" style="left:719px;top:104px;" width="8" height="4" viewBox="0 0 8 4"><path d="M0 0h8l-4 4z"/></svg>
<div class="t" style="left:627px;top:114px;font-size:12px;color:#000;font-family:'Liberation Serif',serif;letter-spacing:-0.25px;-webkit-text-stroke:0.1px #000;word-spacing:1px">B - T = 9.28ms</div>
<div class="a" style="left:716px;top:115px;width:1px;height:15px;background:#aca899"></div>
<svg class="a" style="left:719px;top:120px;" width="8" height="4" viewBox="0 0 8 4"><path d="M0 0h8l-4 4z"/></svg>
<div class="t" style="left:830px;top:98px;font-size:12px;color:#000;font-family:'Liberation Serif',serif;letter-spacing:-0.25px;-webkit-text-stroke:0.1px #000;word-spacing:1px">A - B = 10.022us</div>
<div class="a" style="left:932px;top:98px;width:1px;height:15px;background:#aca899"></div>
<svg class="a" style="left:935px;top:104px;" width="8" height="4" viewBox="0 0 8 4"><path d="M0 0h8l-4 4z"/></svg>
<div class="t" style="left:830px;top:114px;font-size:12px;color:#000;font-family:'Liberation Serif',serif;letter-spacing:-0.25px;-webkit-text-stroke:0.1px #000">壓縮率:否</div>
<div class="a" style="left:0px;top:137px;width:1024px;height:381px;background:#ECE9D8"></div>
<div class="a" style="left:0px;top:137px;width:120px;height:363px;background:#bbbbbb;border-top:1px solid #aca899;border-left:1px solid #aca899;border-right:1px solid #aca899"></div>
<div class="a" style="left:1px;top:165px;width:118px;height:1px;background:#aca899"></div>
<div class="t" style="left:11px;top:146px;font-size:12px;color:#000;">通道名稱</div>
<div class="a" style="left:8px;top:184px;width:13px;height:13px;border:1px solid #aca899;background:#bbbbbb"></div>
<div class="a" style="left:10px;top:190px;width:9px;height:2px;background:#000"></div>
<svg class="a" style="left:0px;top:137px;" width="120" height="363" viewBox="0 0 120 363"><path d="M22 53.5h7" stroke="#aca88c" stroke-dasharray="1 1"/><path d="M30 55.5h26" stroke="#808080" stroke-width="1.5"/><path d="M14.5 60v303M43.5 79v284" stroke="#aca88c" stroke-dasharray="1 2"/><path d="M44 105.5h15" stroke="#aca88c" stroke-dasharray="1 2"/><path d="M44 155.5h15" stroke="#aca88c" stroke-dasharray="1 2"/><path d="M44 205.5h15" stroke="#aca88c" stroke-dasharray="1 2"/><path d="M44 255.5h15" stroke="#aca88c" stroke-dasharray="1 2"/><path d="M44 305.5h15" stroke="#aca88c" stroke-dasharray="1 2"/><path d="M44 355.5h15" stroke="#aca88c" stroke-dasharray="1 2"/></svg>
<div class="a" style="left:59px;top:166px;width:28px;height:50px;background:#0066ff;border-top:1px solid #f0eee0;border-bottom:1px solid #f0eee0"></div>
<div class="t" style="left:61px;top:184px;font-size:15px;color:#fff;font-family:'Liberation Serif',serif;-webkit-text-stroke:0"><span style="display:inline-block;transform:scaleX(.8);transform-origin:0 0">Bus1</span></div>
<svg class="a" style="left:73px;top:234px;" width="13" height="13" viewBox="0 0 13 13"><path d="M1.5 10.5q-1-1.5 .5-3.5l5-4 2 2-4 5q-2 1.5-3.5 .5z" fill="#800000"/><path d="M8 4l4-4" stroke="#800000" stroke-width="1.5"/></svg>
<div class="t" style="left:90px;top:234px;font-size:13px;color:#000;font-family:'Liberation Serif',serif;-webkit-text-stroke:0"><span style="display:inline-block;transform:scaleX(.88);transform-origin:0 0">A0</span></div>
<div class="t" style="left:109px;top:234px;width:11px;overflow:hidden;font-size:13px;color:#8c8c8c;font-family:'Liberation Serif',serif"><span style="display:inline-block;transform:scaleX(.85);transform-origin:0 0">A0</span></div>
<svg class="a" style="left:73px;top:284px;" width="13" height="13" viewBox="0 0 13 13"><path d="M1.5 10.5q-1-1.5 .5-3.5l5-4 2 2-4 5q-2 1.5-3.5 .5z" fill="#ff0000"/><path d="M8 4l4-4" stroke="#ff0000" stroke-width="1.5"/></svg>
<div class="t" style="left:90px;top:284px;font-size:13px;color:#000;font-family:'Liberation Serif',serif;-webkit-text-stroke:0"><span style="display:inline-block;transform:scaleX(.88);transform-origin:0 0">A1</span></div>
<div class="t" style="left:109px;top:284px;width:11px;overflow:hidden;font-size:13px;color:#8c8c8c;font-family:'Liberation Serif',serif"><span style="display:inline-block;transform:scaleX(.85);transform-origin:0 0">A1</span></div>
<svg class="a" style="left:73px;top:334px;" width="13" height="13" viewBox="0 0 13 13"><path d="M1.5 10.5q-1-1.5 .5-3.5l5-4 2 2-4 5q-2 1.5-3.5 .5z" fill="#ff6030"/><path d="M8 4l4-4" stroke="#ff6030" stroke-width="1.5"/><path d="M3 11l6-6M5 11.5l6-6" stroke="#6a6a10" stroke-width=".8"/></svg>
<div class="t" style="left:90px;top:334px;font-size:13px;color:#000;font-family:'Liberation Serif',serif;-webkit-text-stroke:0"><span style="display:inline-block;transform:scaleX(.88);transform-origin:0 0">A2</span></div>
<div class="t" style="left:109px;top:334px;width:11px;overflow:hidden;font-size:13px;color:#8c8c8c;font-family:'Liberation Serif',serif"><span style="display:inline-block;transform:scaleX(.85);transform-origin:0 0">A2</span></div>
<svg class="a" style="left:73px;top:384px;" width="13" height="13" viewBox="0 0 13 13"><path d="M1.5 10.5q-1-1.5 .5-3.5l5-4 2 2-4 5q-2 1.5-3.5 .5z" fill="#ffff00"/><path d="M8 4l4-4" stroke="#ffff00" stroke-width="1.5"/></svg>
<div class="t" style="left:90px;top:384px;font-size:13px;color:#000;font-family:'Liberation Serif',serif;-webkit-text-stroke:0"><span style="display:inline-block;transform:scaleX(.88);transform-origin:0 0">A3</span></div>
<div class="t" style="left:109px;top:384px;width:11px;overflow:hidden;font-size:13px;color:#8c8c8c;font-family:'Liberation Serif',serif"><span style="display:inline-block;transform:scaleX(.85);transform-origin:0 0">A3</span></div>
<svg class="a" style="left:73px;top:434px;" width="13" height="13" viewBox="0 0 13 13"><path d="M1.5 10.5q-1-1.5 .5-3.5l5-4 2 2-4 5q-2 1.5-3.5 .5z" fill="#00e000"/><path d="M8 4l4-4" stroke="#00e000" stroke-width="1.5"/></svg>
<div class="t" style="left:90px;top:434px;font-size:13px;color:#000;font-family:'Liberation Serif',serif;-webkit-text-stroke:0"><span style="display:inline-block;transform:scaleX(.88);transform-origin:0 0">A4</span></div>
<div class="t" style="left:109px;top:434px;width:11px;overflow:hidden;font-size:13px;color:#8c8c8c;font-family:'Liberation Serif',serif"><span style="display:inline-block;transform:scaleX(.85);transform-origin:0 0">A4</span></div>
<svg class="a" style="left:73px;top:484px;" width="13" height="13" viewBox="0 0 13 13"><path d="M1.5 10.5q-1-1.5 .5-3.5l5-4 2 2-4 5q-2 1.5-3.5 .5z" fill="#0000ff"/><path d="M8 4l4-4" stroke="#0000ff" stroke-width="1.5"/></svg>
<div class="t" style="left:90px;top:484px;font-size:13px;color:#000;font-family:'Liberation Serif',serif;-webkit-text-stroke:0"><span style="display:inline-block;transform:scaleX(.88);transform-origin:0 0">A5</span></div>
<div class="t" style="left:109px;top:484px;width:11px;overflow:hidden;font-size:13px;color:#8c8c8c;font-family:'Liberation Serif',serif"><span style="display:inline-block;transform:scaleX(.85);transform-origin:0 0">A5</span></div>
<div class="a" style="left:123px;top:137px;width:60px;height:363px;border-left:1px solid #aca899;border-right:1px solid #aca899;border-top:1px solid #aca899;background:#ECE9D8"></div>
<div class="t" style="left:128px;top:145px;font-size:12px;color:#000;">觸發條件</div>
<div class="a" style="left:124px;top:165px;width:58px;height:1px;background:#aca899"></div>
<div class="a" style="left:124px;top:166px;width:57px;height:50px;border-top:1px solid #000;border-left:1px solid #000;border-bottom:1px solid #fff;border-right:1px solid #fff;box-shadow:inset 1px 1px 0 #fbf8e8;background:#ECE9D8"></div>
<div class="a" style="left:124px;top:216px;width:57px;height:49px;border:1px solid #aca899;background:#ECE9D8"></div>
<div class="a" style="left:124px;top:266px;width:57px;height:49px;border:1px solid #aca899;background:#ECE9D8"></div>
<div class="a" style="left:124px;top:316px;width:57px;height:49px;border:1px solid #aca899;background:#ECE9D8"></div>
<div class="a" style="left:124px;top:366px;width:57px;height:49px;border:1px solid #aca899;background:#ECE9D8"></div>
<div class="a" style="left:124px;top:416px;width:57px;height:49px;border:1px solid #aca899;background:#ECE9D8"></div>
<div class="a" style="left:124px;top:466px;width:57px;height:49px;border:1px solid #aca899;background:#ECE9D8"></div>
<div class="a" style="left:186px;top:137px;width:57px;height:363px;border-left:1px solid #aca899;border-right:1px solid #aca899;border-top:1px solid #aca899;background:#ECE9D8"></div>
<div class="t" style="left:190px;top:145px;font-size:12px;color:#000;">濾波條件</div>
<div class="a" style="left:187px;top:165px;width:55px;height:1px;background:#aca899"></div>
<div class="a" style="left:188px;top:166px;width:53px;height:50px;border-top:1px solid #000;border-left:1px solid #000;border-bottom:1px solid #fff;border-right:1px solid #fff;box-shadow:inset 1px 1px 0 #fbf8e8;background:#ECE9D8"></div>
<div class="a" style="left:188px;top:216px;width:53px;height:49px;border:1px solid #aca899;background:#ECE9D8"></div>
<div class="a" style="left:188px;top:266px;width:53px;height:49px;border:1px solid #aca899;background:#ECE9D8"></div>
<div class="a" style="left:188px;top:316px;width:53px;height:49px;border:1px solid #aca899;background:#ECE9D8"></div>
<div class="a" style="left:188px;top:366px;width:53px;height:49px;border:1px solid #aca899;background:#ECE9D8"></div>
<div class="a" style="left:188px;top:416px;width:53px;height:49px;border:1px solid #aca899;background:#ECE9D8"></div>
<div class="a" style="left:188px;top:466px;width:53px;height:49px;border:1px solid #aca899;background:#ECE9D8"></div>
<svg class="a" style="left:146px;top:184px;" width="13" height="13" viewBox="0 0 13 13"><rect x="0.5" y="0.5" width="12" height="12" fill="#c4c4c4" stroke="#888" stroke-dasharray="1 1"/><path d="M1 1l11 11M12 1l-11 11" stroke="#8a8a8a"/></svg>
<svg class="a" style="left:146px;top:234px;" width="13" height="13" viewBox="0 0 13 13"><rect x="0.5" y="0.5" width="12" height="12" fill="#c4c4c4" stroke="#888" stroke-dasharray="1 1"/><path d="M1 1l11 11M12 1l-11 11" stroke="#8a8a8a"/></svg>
<svg class="a" style="left:146px;top:284px;" width="13" height="13" viewBox="0 0 13 13"><rect x="0.5" y="0.5" width="12" height="12" fill="#c4c4c4" stroke="#888" stroke-dasharray="1 1"/><path d="M1 1l11 11M12 1l-11 11" stroke="#8a8a8a"/></svg>
<svg class="a" style="left:146px;top:334px;" width="13" height="13" viewBox="0 0 13 13"><rect x="0.5" y="0.5" width="12" height="12" fill="#c4c4c4" stroke="#888" stroke-dasharray="1 1"/><path d="M1 1l11 11M12 1l-11 11" stroke="#8a8a8a"/></svg>
<svg class="a" style="left:146px;top:384px;" width="13" height="13" viewBox="0 0 13 13"><rect x="0.5" y="0.5" width="12" height="12" fill="#c4c4c4" stroke="#888" stroke-dasharray="1 1"/><path d="M1 1l11 11M12 1l-11 11" stroke="#8a8a8a"/></svg>
<svg class="a" style="left:146px;top:434px;" width="13" height="13" viewBox="0 0 13 13"><rect x="0.5" y="0.5" width="12" height="12" fill="#c4c4c4" stroke="#888" stroke-dasharray="1 1"/><path d="M1 1l11 11M12 1l-11 11" stroke="#8a8a8a"/></svg>
<svg class="a" style="left:146px;top:484px;" width="13" height="13" viewBox="0 0 13 13"><rect x="0.5" y="0.5" width="12" height="12" fill="#c4c4c4" stroke="#888" stroke-dasharray="1 1"/><path d="M1 1l11 11M12 1l-11 11" stroke="#8a8a8a"/></svg>
<div class="a" style="left:172px;top:168px;width:1px;height:46px;background:#aca899"></div>
<svg class="a" style="left:175px;top:190px;" width="6" height="4" viewBox="0 0 6 4"><path d="M0 0h6l-3 4z"/></svg>
<div class="a" style="left:232px;top:168px;width:1px;height:46px;background:#aca899"></div>
<svg class="a" style="left:234px;top:190px;" width="6" height="4" viewBox="0 0 6 4"><path d="M0 0h6l-3 4z"/></svg>
<div class="t" style="left:200px;top:185px;font-size:12px;color:#000;font-family:'Liberation Serif',serif;-webkit-text-stroke:0"><span style="display:inline-block;transform:scaleX(.85);transform-origin:0 0">OX5A</span></div>
<svg class="a" style="left:208px;top:234px;" width="13" height="14" viewBox="0 0 13 14"><rect x="0.5" y="0.5" width="12" height="10" fill="#c4c4c4" stroke="#888" stroke-dasharray="1 1"/><path d="M4.5 1v10M8.5 1v10M1 5.5h11" stroke="#888" stroke-dasharray="1 1"/><rect x="0" y="11" width="13" height="3" fill="#000"/></svg>
<svg class="a" style="left:208px;top:284px;" width="13" height="14" viewBox="0 0 13 14"><rect x="0.5" y="3.5" width="12" height="10" fill="#c4c4c4" stroke="#888" stroke-dasharray="1 1"/><path d="M4.5 4v10M8.5 4v10M1 8.5h11" stroke="#888" stroke-dasharray="1 1"/><rect x="0" y="0" width="13" height="3" fill="#000"/></svg>
<svg class="a" style="left:208px;top:334px;" width="13" height="14" viewBox="0 0 13 14"><rect x="0.5" y="0.5" width="12" height="10" fill="#c4c4c4" stroke="#888" stroke-dasharray="1 1"/><path d="M4.5 1v10M8.5 1v10M1 5.5h11" stroke="#888" stroke-dasharray="1 1"/><rect x="0" y="11" width="13" height="3" fill="#000"/></svg>
<svg class="a" style="left:208px;top:384px;" width="13" height="14" viewBox="0 0 13 14"><rect x="0.5" y="3.5" width="12" height="10" fill="#c4c4c4" stroke="#888" stroke-dasharray="1 1"/><path d="M4.5 4v10M8.5 4v10M1 8.5h11" stroke="#888" stroke-dasharray="1 1"/><rect x="0" y="0" width="13" height="3" fill="#000"/></svg>
<svg class="a" style="left:208px;top:434px;" width="13" height="14" viewBox="0 0 13 14"><rect x="0.5" y="3.5" width="12" height="10" fill="#c4c4c4" stroke="#888" stroke-dasharray="1 1"/><path d="M4.5 4v10M8.5 4v10M1 8.5h11" stroke="#888" stroke-dasharray="1 1"/><rect x="0" y="0" width="13" height="3" fill="#000"/></svg>
<svg class="a" style="left:208px;top:484px;" width="13" height="14" viewBox="0 0 13 14"><rect x="0.5" y="0.5" width="12" height="10" fill="#c4c4c4" stroke="#888" stroke-dasharray="1 1"/><path d="M4.5 1v10M8.5 1v10M1 5.5h11" stroke="#888" stroke-dasharray="1 1"/><rect x="0" y="11" width="13" height="3" fill="#000"/></svg>
<div class="a" style="left:243px;top:282px;width:4px;height:15px;background:#b8c4e4"></div>
<svg class="a" style="left:243px;top:285px;" width="4" height="9" viewBox="0 0 4 9"><path d="M4 0a4 4.5 0 0 0 0 9z" fill="#000"/></svg>
<svg class="a" style="left:247px;top:137px;overflow:hidden" width="759" height="363" viewBox="247 137 759 363"><rect x="247" y="137" width="759" height="363" fill="#fff"/><rect x="247" y="137" width="759" height="29" fill="#c0c0c0"/><rect x="247" y="166" width="759" height="1" fill="#000"/><rect x="247" y="160" width="1" height="6" fill="#000"/><rect x="262" y="161" width="1" height="4" fill="#000"/><rect x="277" y="161" width="1" height="4" fill="#000"/><rect x="292" y="161" width="1" height="4" fill="#000"/><rect x="307" y="161" width="1" height="4" fill="#000"/><rect x="322" y="160" width="1" height="6" fill="#000"/><rect x="337" y="161" width="1" height="4" fill="#000"/><rect x="352" y="161" width="1" height="4" fill="#000"/><rect x="367" y="161" width="1" height="4" fill="#000"/><rect x="382" y="161" width="1" height="4" fill="#000"/><rect x="397" y="160" width="1" height="6" fill="#000"/><rect x="412" y="161" width="1" height="4" fill="#000"/><rect x="427" y="161" width="1" height="4" fill="#000"/><rect x="442" y="161" width="1" height="4" fill="#000"/><rect x="457" y="161" width="1" height="4" fill="#000"/><rect x="472" y="160" width="1" height="6" fill="#000"/><rect x="487" y="161" width="1" height="4" fill="#000"/><rect x="502" y="161" width="1" height="4" fill="#000"/><rect x="517" y="161" width="1" height="4" fill="#000"/><rect x="532" y="161" width="1" height="4" fill="#000"/><rect x="547" y="160" width="1" height="6" fill="#000"/><rect x="562" y="161" width="1" height="4" fill="#000"/><rect x="577" y="161" width="1" height="4" fill="#000"/><rect x="592" y="161" width="1" height="4" fill="#000"/><rect x="607" y="161" width="1" height="4" fill="#000"/><rect x="622" y="160" width="1" height="6" fill="#000"/><rect x="637" y="161" width="1" height="4" fill="#000"/><rect x="652" y="161" width="1" height="4" fill="#000"/><rect x="667" y="161" width="1" height="4" fill="#000"/><rect x="682" y="161" width="1" height="4" fill="#000"/><rect x="697" y="160" width="1" height="6" fill="#000"/><rect x="712" y="161" width="1" height="4" fill="#000"/><rect x="727" y="161" width="1" height="4" fill="#000"/><rect x="742" y="161" width="1" height="4" fill="#000"/><rect x="757" y="161" width="1" height="4" fill="#000"/><rect x="772" y="160" width="1" height="6" fill="#000"/><rect x="787" y="161" width="1" height="4" fill="#000"/><rect x="802" y="161" width="1" height="4" fill="#000"/><rect x="817" y="161" width="1" height="4" fill="#000"/><rect x="832" y="161" width="1" height="4" fill="#000"/><rect x="847" y="160" width="1" height="6" fill="#000"/><rect x="862" y="161" width="1" height="4" fill="#000"/><rect x="877" y="161" width="1" height="4" fill="#000"/><rect x="892" y="161" width="1" height="4" fill="#000"/><rect x="907" y="161" width="1" height="4" fill="#000"/><rect x="922" y="160" width="1" height="6" fill="#000"/><rect x="937" y="161" width="1" height="4" fill="#000"/><rect x="952" y="161" width="1" height="4" fill="#000"/><rect x="967" y="161" width="1" height="4" fill="#000"/><rect x="982" y="161" width="1" height="4" fill="#000"/><rect x="997" y="160" width="1" height="6" fill="#000"/><rect x="621" y="160" width="2" height="6" fill="#000"/><text x="325" y="158" font-size="11" text-anchor="middle" font-family="Liberation Sans" transform="translate(325 0) scale(.84 1) translate(-325 0)">9.27ms</text><text x="400" y="158" font-size="11" text-anchor="middle" font-family="Liberation Sans" transform="translate(400 0) scale(.84 1) translate(-400 0)">9.273ms</text><text x="475" y="158" font-size="11" text-anchor="middle" font-family="Liberation Sans" transform="translate(475 0) scale(.84 1) translate(-475 0)">9.275ms</text><text x="550" y="158" font-size="11" text-anchor="middle" font-family="Liberation Sans" transform="translate(550 0) scale(.84 1) translate(-550 0)">9.278ms</text><text x="625" y="158" font-size="11" text-anchor="middle" font-family="Liberation Sans" transform="translate(625 0) scale(.84 1) translate(-625 0)">9.281ms</text><text x="700" y="158" font-size="11" text-anchor="middle" font-family="Liberation Sans" transform="translate(700 0) scale(.84 1) translate(-700 0)">9.284ms</text><text x="775" y="158" font-size="11" text-anchor="middle" font-family="Liberation Sans" transform="translate(775 0) scale(.84 1) translate(-775 0)">9.286ms</text><text x="850" y="158" font-size="11" text-anchor="middle" font-family="Liberation Sans" transform="translate(850 0) scale(.84 1) translate(-850 0)">9.289ms</text><text x="925" y="158" font-size="11" text-anchor="middle" font-family="Liberation Sans" transform="translate(925 0) scale(.84 1) translate(-925 0)">9.292ms</text><text x="1000" y="158" font-size="11" text-anchor="middle" font-family="Liberation Sans" transform="translate(1000 0) scale(.84 1) translate(-1000 0)">9.295ms</text><path d="M247.5 188L250.5 169.5H257.5L260.5 188V195L257.5 213.5H250.5L247.5 195Z" fill="none" stroke="#008000" stroke-width="1" shape-rendering="crispEdges"/><path d="M260.5 188L263.5 169.5H300.5L303.5 188V195L300.5 213.5H263.5L260.5 195Z" fill="none" stroke="#008000" stroke-width="1" shape-rendering="crispEdges"/><text x="282.2" y="198.5" font-size="18" text-anchor="middle" font-family="Liberation Serif" fill="#000" transform="translate(282.2 0) scale(0.86 1) translate(-282.2 0)">0X5E</text><path d="M330.5 188L333.5 169.5H384.5L387.5 188V195L384.5 213.5H333.5L330.5 195Z" fill="none" stroke="#008000" stroke-width="1" shape-rendering="crispEdges"/><text x="360.5" y="198.5" font-size="18" text-anchor="middle" font-family="Liberation Serif" fill="#000" transform="translate(360.5 0) scale(0.86 1) translate(-360.5 0)">0X5A</text><path d="M387.5 188L390.5 169.5H440.5L443.5 188V195L440.5 213.5H390.5L387.5 195Z" fill="none" stroke="#008000" stroke-width="1" shape-rendering="crispEdges"/><text x="417.0" y="198.5" font-size="18" text-anchor="middle" font-family="Liberation Serif" fill="#000" transform="translate(417.0 0) scale(0.86 1) translate(-417.0 0)">0X5B</text><path d="M443.5 188L446.5 169.5H497.5L500.5 188V195L497.5 213.5H446.5L443.5 195Z" fill="none" stroke="#008000" stroke-width="1" shape-rendering="crispEdges"/><text x="473.5" y="198.5" font-size="18" text-anchor="middle" font-family="Liberation Serif" fill="#000" transform="translate(473.5 0) scale(0.86 1) translate(-473.5 0)">0X5C</text><path d="M500.5 188L503.5 169.5H554.5L557.5 188V195L554.5 213.5H503.5L500.5 195Z" fill="none" stroke="#008000" stroke-width="1" shape-rendering="crispEdges"/><text x="530.5" y="198.5" font-size="18" text-anchor="middle" font-family="Liberation Serif" fill="#000" transform="translate(530.5 0) scale(0.86 1) translate(-530.5 0)">0X5D</text><path d="M557.5 188L560.5 169.5H597.5L600.5 188V195L597.5 213.5H560.5L557.5 195Z" fill="none" stroke="#008000" stroke-width="1" shape-rendering="crispEdges"/><text x="579.2" y="198.5" font-size="18" text-anchor="middle" font-family="Liberation Serif" fill="#000" transform="translate(579.2 0) scale(0.86 1) translate(-579.2 0)">0X5E</text><path d="M628.5 188L631.5 169.5H680.5L683.5 188V195L680.5 213.5H631.5L628.5 195Z" fill="none" stroke="#008000" stroke-width="1" shape-rendering="crispEdges"/><text x="657.5" y="198.5" font-size="18" text-anchor="middle" font-family="Liberation Serif" fill="#000" transform="translate(657.5 0) scale(0.86 1) translate(-657.5 0)">0X5A</text><path d="M683.5 188L686.5 169.5H737.5L740.5 188V195L737.5 213.5H686.5L683.5 195Z" fill="none" stroke="#008000" stroke-width="1" shape-rendering="crispEdges"/><text x="713.5" y="198.5" font-size="18" text-anchor="middle" font-family="Liberation Serif" fill="#000" transform="translate(713.5 0) scale(0.86 1) translate(-713.5 0)">0X5B</text><path d="M740.5 188L743.5 169.5H793.5L796.5 188V195L793.5 213.5H743.5L740.5 195Z" fill="none" stroke="#008000" stroke-width="1" shape-rendering="crispEdges"/><text x="770.0" y="198.5" font-size="18" text-anchor="middle" font-family="Liberation Serif" fill="#000" transform="translate(770.0 0) scale(0.86 1) translate(-770.0 0)">0X5C</text><path d="M796.5 188L799.5 169.5H850.5L853.5 188V195L850.5 213.5H799.5L796.5 195Z" fill="none" stroke="#008000" stroke-width="1" shape-rendering="crispEdges"/><text x="826.5" y="198.5" font-size="18" text-anchor="middle" font-family="Liberation Serif" fill="#000" transform="translate(826.5 0) scale(0.86 1) translate(-826.5 0)">0X5D</text><path d="M853.5 188L856.5 169.5H894.5L897.5 188V195L894.5 213.5H856.5L853.5 195Z" fill="none" stroke="#008000" stroke-width="1" shape-rendering="crispEdges"/><text x="875.7" y="198.5" font-size="18" text-anchor="middle" font-family="Liberation Serif" fill="#000" transform="translate(875.7 0) scale(0.86 1) translate(-875.7 0)">0X5E</text><path d="M925.5 188L928.5 169.5H977.5L980.5 188V195L977.5 213.5H928.5L925.5 195Z" fill="none" stroke="#008000" stroke-width="1" shape-rendering="crispEdges"/><text x="954.5" y="198.5" font-size="18" text-anchor="middle" font-family="Liberation Serif" fill="#000" transform="translate(954.5 0) scale(0.86 1) translate(-954.5 0)">0X5A</text><path d="M980.5 188L983.5 169.5H1034.5L1037.5 188V195L1034.5 213.5H983.5L980.5 195Z" fill="none" stroke="#008000" stroke-width="1" shape-rendering="crispEdges"/><text x="1002.7" y="198.5" font-size="18" text-anchor="middle" font-family="Liberation Serif" fill="#000" transform="translate(1002.7 0) scale(0.86 1) translate(-1002.7 0)">0X5B</text><path d="M1037.5 188L1040.5 169.5H1090.5L1093.5 188V195L1090.5 213.5H1040.5L1037.5 195Z" fill="none" stroke="#008000" stroke-width="1" shape-rendering="crispEdges"/><text x="1067.0" y="198.5" font-size="18" text-anchor="middle" font-family="Liberation Serif" fill="#000" transform="translate(1067.0 0) scale(0.86 1) translate(-1067.0 0)">0X5C</text><path d="M1093.5 188L1096.5 169.5H1147.5L1150.5 188V195L1147.5 213.5H1096.5L1093.5 195Z" fill="none" stroke="#008000" stroke-width="1" shape-rendering="crispEdges"/><text x="1123.5" y="198.5" font-size="18" text-anchor="middle" font-family="Liberation Serif" fill="#000" transform="translate(1123.5 0) scale(0.86 1) translate(-1123.5 0)">0X5D</text><path d="M1150.5 188L1153.5 169.5H1191.5L1194.5 188V195L1191.5 213.5H1153.5L1150.5 195Z" fill="none" stroke="#008000" stroke-width="1" shape-rendering="crispEdges"/><text x="1172.7" y="198.5" font-size="18" text-anchor="middle" font-family="Liberation Serif" fill="#000" transform="translate(1172.7 0) scale(0.86 1) translate(-1172.7 0)">0X5E</text><path d="M247 219H260.5V263.5H387.5V219H443.5V263.5H500.5V219H557.5V263.5H683.5V219H740.5V263.5H796.5V219H853.5V263.5H980.5V219H1037.5V263.5H1093.5V219H1150.5V263.5H1194.5" fill="none" stroke="#800000" stroke-width="1" transform="translate(0 0)"/><rect x="247" y="218" width="14" height="2" fill="#800000"/><rect x="387" y="218" width="57" height="2" fill="#800000"/><rect x="500" y="218" width="58" height="2" fill="#800000"/><rect x="683" y="218" width="58" height="2" fill="#800000"/><rect x="796" y="218" width="58" height="2" fill="#800000"/><rect x="980" y="218" width="58" height="2" fill="#800000"/><rect x="1093" y="218" width="58" height="2" fill="#800000"/><path d="M247 313.5H260.5V269H443.5V313.5H557.5V269H740.5V313.5H853.5V269H1037.5V313.5H1150.5V269H1194.5" fill="none" stroke="#ff0000" stroke-width="1" transform="translate(0 0)"/><rect x="260" y="268" width="184" height="2" fill="#ff0000"/><rect x="557" y="268" width="184" height="2" fill="#ff0000"/><rect x="853" y="268" width="185" height="2" fill="#ff0000"/><rect x="1150" y="268" width="45" height="2" fill="#ff0000"/><path d="M247 319H303.5V363.5H443.5V319H600.5V363.5H740.5V319H897.5V363.5H1037.5V319H1194.5" fill="none" stroke="#ff8040" stroke-width="1" transform="translate(0 0)"/><rect x="247" y="318" width="57" height="2" fill="#ff8040"/><rect x="443" y="318" width="158" height="2" fill="#ff8040"/><rect x="740" y="318" width="158" height="2" fill="#ff8040"/><rect x="1037" y="318" width="158" height="2" fill="#ff8040"/><path d="M247 369H1194.5" fill="none" stroke="#ffff00" stroke-width="1" transform="translate(0 0)"/><rect x="247" y="368" width="948" height="2" fill="#ffff00"/><path d="M247 419H1194.5" fill="none" stroke="#00f080" stroke-width="1" transform="translate(0 0)"/><rect x="247" y="418" width="948" height="2" fill="#00f080"/><path d="M247 513.5H1194.5" fill="none" stroke="#0000ff" stroke-width="1" transform="translate(0 0)"/><text x="319.5" y="255.5" font-size="18" text-anchor="middle" font-family="Liberation Serif" fill="#000" transform="translate(319.5 0) scale(0.86 1) translate(-319.5 0)">4.2us</text><text x="411.0" y="255.5" font-size="18" text-anchor="middle" font-family="Liberation Serif" fill="#000" transform="translate(411.0 0) scale(0.86 1) translate(-411.0 0)">2.1us</text><text x="467.5" y="255.5" font-size="18" text-anchor="middle" font-family="Liberation Serif" fill="#000" transform="translate(467.5 0) scale(0.86 1) translate(-467.5 0)">2.1us</text><text x="524.5" y="255.5" font-size="18" text-anchor="middle" font-family="Liberation Serif" fill="#000" transform="translate(524.5 0) scale(0.86 1) translate(-524.5 0)">2.1us</text><text x="616.0" y="255.5" font-size="18" text-anchor="middle" font-family="Liberation Serif" fill="#000" transform="translate(616.0 0) scale(0.86 1) translate(-616.0 0)">4.22us</text><text x="707.5" y="255.5" font-size="18" text-anchor="middle" font-family="Liberation Serif" fill="#000" transform="translate(707.5 0) scale(0.86 1) translate(-707.5 0)">2.1us</text><text x="764.0" y="255.5" font-size="18" text-anchor="middle" font-family="Liberation Serif" fill="#000" transform="translate(764.0 0) scale(0.86 1) translate(-764.0 0)">2.1us</text><text x="820.5" y="255.5" font-size="18" text-anchor="middle" font-family="Liberation Serif" fill="#000" transform="translate(820.5 0) scale(0.86 1) translate(-820.5 0)">2.1us</text><text x="912.5" y="255.5" font-size="18" text-anchor="middle" font-family="Liberation Serif" fill="#000" transform="translate(912.5 0) scale(0.86 1) translate(-912.5 0)">4.2us</text><text x="1004.5" y="255.5" font-size="18" text-anchor="middle" font-family="Liberation Serif" fill="#000" transform="translate(1004.5 0) scale(0.86 1) translate(-1004.5 0)">2.1us</text><text x="347.5" y="305.5" font-size="18" text-anchor="middle" font-family="Liberation Serif" fill="#000" transform="translate(347.5 0) scale(0.86 1) translate(-347.5 0)">6.8us</text><text x="496.0" y="305.5" font-size="18" text-anchor="middle" font-family="Liberation Serif" fill="#000" transform="translate(496.0 0) scale(0.86 1) translate(-496.0 0)">4.2us</text><text x="644.5" y="305.5" font-size="18" text-anchor="middle" font-family="Liberation Serif" fill="#000" transform="translate(644.5 0) scale(0.86 1) translate(-644.5 0)">6.78us</text><text x="792.5" y="305.5" font-size="18" text-anchor="middle" font-family="Liberation Serif" fill="#000" transform="translate(792.5 0) scale(0.86 1) translate(-792.5 0)">4.2us</text><text x="941.0" y="305.5" font-size="18" text-anchor="middle" font-family="Liberation Serif" fill="#000" transform="translate(941.0 0) scale(0.86 1) translate(-941.0 0)">6.8us</text><text x="284.5" y="355.5" font-size="18" text-anchor="middle" font-family="Liberation Serif" fill="#000" transform="translate(284.5 0) scale(0.86 1) translate(-284.5 0)">6.8us</text><text x="382.5" y="355.5" font-size="18" text-anchor="middle" font-family="Liberation Serif" fill="#000" transform="translate(382.5 0) scale(0.86 1) translate(-382.5 0)">4.2us</text><text x="531.5" y="355.5" font-size="18" text-anchor="middle" font-family="Liberation Serif" fill="#000" transform="translate(531.5 0) scale(0.86 1) translate(-531.5 0)">6.8us</text><text x="680.0" y="355.5" font-size="18" text-anchor="middle" font-family="Liberation Serif" fill="#000" transform="translate(680.0 0) scale(0.86 1) translate(-680.0 0)">4.2us</text><text x="828.5" y="355.5" font-size="18" text-anchor="middle" font-family="Liberation Serif" fill="#000" transform="translate(828.5 0) scale(0.86 1) translate(-828.5 0)">6.8us</text><text x="977.0" y="355.5" font-size="18" text-anchor="middle" font-family="Liberation Serif" fill="#000" transform="translate(977.0 0) scale(0.86 1) translate(-977.0 0)">4.2us</text><text x="693" y="405.5" font-size="18" text-anchor="middle" font-family="Liberation Serif" fill="#000" transform="translate(693 0) scale(0.86 1) translate(-693 0)">903.6us</text><text x="693" y="455.5" font-size="18" text-anchor="middle" font-family="Liberation Serif" fill="#000" transform="translate(693 0) scale(0.86 1) translate(-693 0)">903.6us</text><text x="693" y="505.5" font-size="18" text-anchor="middle" font-family="Liberation Serif" fill="#000" transform="translate(693 0) scale(0.86 1) translate(-693 0)">903.6us</text><rect x="303" y="167" width="27" height="333" fill="#808080"/><rect x="303" y="217" width="27" height="1" fill="#fff"/><rect x="602" y="167" width="26" height="333" fill="#808080"/><rect x="602" y="217" width="26" height="1" fill="#fff"/><rect x="897" y="167" width="28" height="333" fill="#808080"/><rect x="897" y="217" width="28" height="1" fill="#fff"/><rect x="247" y="166" width="1" height="334" fill="#ff0000"/><rect x="247" y="153" width="1" height="13" fill="#000"/><rect x="330" y="150" width="1" height="4" fill="#ffff00"/><rect x="330" y="167" width="1" height="333" fill="#ffff00"/><rect x="601" y="150" width="1" height="4" fill="#00ffff"/><rect x="600" y="167" width="2" height="333" fill="#00ffff"/><rect x="248" y="141" width="9" height="13" fill="#000"/><rect x="248" y="141" width="8" height="12" fill="#0080ff"/><rect x="247" y="138" width="7" height="12" fill="#ff0000"/><rect x="254" y="138" width="1" height="12" fill="#000"/><rect x="248" y="150" width="7" height="1" fill="#000"/><rect x="247" y="138" width="2" height="1" fill="#0ff"/><rect x="247" y="145" width="1" height="1" fill="#0ff"/><rect x="247" y="154" width="1" height="3" fill="#0080ff"/><rect x="325" y="138" width="12" height="12" fill="#000"/><rect x="324" y="138" width="12" height="11" fill="#ffff00"/><text x="330" y="148" font-size="11" font-weight="bold" text-anchor="middle" fill="#0000ff" font-family="Liberation Sans">A</text><rect x="596" y="138" width="12" height="13" fill="#000"/><rect x="595" y="138" width="12" height="12" fill="#00ffff"/><text x="601" y="148" font-size="12" text-anchor="middle" fill="#ff0000" font-family="Liberation Serif">B</text><path d="M616 138h13l-6.5 7z" fill="#ff0000"/><rect x="997" y="138" width="9" height="13" fill="#000"/><rect x="997" y="138" width="9" height="12" fill="#0080ff"/><text x="1003" y="148" font-size="12" text-anchor="middle" fill="#ff8000" font-family="Liberation Serif">D</text></svg>
<div class="a" style="left:0px;top:500px;width:119px;height:17px;background:linear-gradient(#f3f1ea,#fefefb)"></div>
<div class="a" style="left:1px;top:501px;width:16px;height:15px;border:1px solid #fff;border-radius:3px;background:linear-gradient(135deg,#dae5fd 0%,#c5d6fc 45%,#b6c9f6 100%);box-shadow:inset -1px -1px 0 #a9bdee,0 1px 0 #b0c4ee"></div>
<svg class="a" style="left:6px;top:504px;" width="6" height="8" viewBox="0 0 6 8"><path d="M5 0.5l-3.5 3.5 3.5 3.5" stroke="#4d6185" stroke-width="2" fill="none"/></svg>
<div class="a" style="left:18px;top:501px;width:84px;height:15px;border:1px solid #fff;border-radius:3px;background:linear-gradient(135deg,#dae5fd 0%,#c5d6fc 45%,#b6c9f6 100%);box-shadow:inset -1px -1px 0 #a9bdee,0 1px 0 #b0c4ee"></div>
<svg class="a" style="left:56px;top:505px;" width="8" height="7" viewBox="0 0 8 7"><path d="M0.5 0v7M2.5 0v7M4.5 0v7M6.5 0v7" stroke="#eef3fe"/><path d="M1.5 0v7M3.5 0v7M5.5 0v7M7.5 0v7" stroke="#8da5dc"/></svg>
<div class="a" style="left:103px;top:501px;width:16px;height:15px;border:1px solid #fff;border-radius:3px;background:linear-gradient(135deg,#dae5fd 0%,#c5d6fc 45%,#b6c9f6 100%);box-shadow:inset -1px -1px 0 #a9bdee,0 1px 0 #b0c4ee"></div>
<svg class="a" style="left:108px;top:504px;" width="6" height="8" viewBox="0 0 6 8"><path d="M1 0.5l3.5 3.5-3.5 3.5" stroke="#4d6185" stroke-width="2" fill="none"/></svg>
<div class="a" style="left:124px;top:500px;width:58px;height:17px;background:linear-gradient(#f3f1ea,#fefefb)"></div>
<div class="a" style="left:124px;top:501px;width:16px;height:15px;border:1px solid #fff;border-radius:3px;background:linear-gradient(135deg,#dae5fd 0%,#c5d6fc 45%,#b6c9f6 100%);box-shadow:inset -1px -1px 0 #a9bdee,0 1px 0 #b0c4ee"></div>
<svg class="a" style="left:129px;top:504px;" width="6" height="8" viewBox="0 0 6 8"><path d="M5 0.5l-3.5 3.5 3.5 3.5" stroke="#4d6185" stroke-width="2" fill="none"/></svg>
<div class="a" style="left:141px;top:501px;width:17px;height:15px;border:1px solid #fff;border-radius:3px;background:linear-gradient(135deg,#dae5fd 0%,#c5d6fc 45%,#b6c9f6 100%);box-shadow:inset -1px -1px 0 #a9bdee,0 1px 0 #b0c4ee"></div>
<svg class="a" style="left:145px;top:505px;" width="8" height="7" viewBox="0 0 8 7"><path d="M0.5 0v7M2.5 0v7M4.5 0v7M6.5 0v7" stroke="#eef3fe"/><path d="M1.5 0v7M3.5 0v7M5.5 0v7M7.5 0v7" stroke="#8da5dc"/></svg>
<div class="a" style="left:166px;top:501px;width:15px;height:15px;border:1px solid #fff;border-radius:3px;background:linear-gradient(135deg,#dae5fd 0%,#c5d6fc 45%,#b6c9f6 100%);box-shadow:inset -1px -1px 0 #a9bdee,0 1px 0 #b0c4ee"></div>
<svg class="a" style="left:170px;top:504px;" width="6" height="8" viewBox="0 0 6 8"><path d="M1 0.5l3.5 3.5-3.5 3.5" stroke="#4d6185" stroke-width="2" fill="none"/></svg>
<div class="a" style="left:187px;top:500px;width:55px;height:17px;background:linear-gradient(#f3f1ea,#fefefb)"></div>
<div class="a" style="left:188px;top:501px;width:15px;height:15px;border:1px solid #fff;border-radius:3px;background:linear-gradient(135deg,#dae5fd 0%,#c5d6fc 45%,#b6c9f6 100%);box-shadow:inset -1px -1px 0 #a9bdee,0 1px 0 #b0c4ee"></div>
<svg class="a" style="left:192px;top:504px;" width="6" height="8" viewBox="0 0 6 8"><path d="M5 0.5l-3.5 3.5 3.5 3.5" stroke="#4d6185" stroke-width="2" fill="none"/></svg>
<div class="a" style="left:204px;top:501px;width:17px;height:15px;border:1px solid #fff;border-radius:3px;background:linear-gradient(135deg,#dae5fd 0%,#c5d6fc 45%,#b6c9f6 100%);box-shadow:inset -1px -1px 0 #a9bdee,0 1px 0 #b0c4ee"></div>
<svg class="a" style="left:208px;top:505px;" width="8" height="7" viewBox="0 0 8 7"><path d="M0.5 0v7M2.5 0v7M4.5 0v7M6.5 0v7" stroke="#eef3fe"/><path d="M1.5 0v7M3.5 0v7M5.5 0v7M7.5 0v7" stroke="#8da5dc"/></svg>
<div class="a" style="left:226px;top:501px;width:15px;height:15px;border:1px solid #fff;border-radius:3px;background:linear-gradient(135deg,#dae5fd 0%,#c5d6fc 45%,#b6c9f6 100%);box-shadow:inset -1px -1px 0 #a9bdee,0 1px 0 #b0c4ee"></div>
<svg class="a" style="left:230px;top:504px;" width="6" height="8" viewBox="0 0 6 8"><path d="M1 0.5l3.5 3.5-3.5 3.5" stroke="#4d6185" stroke-width="2" fill="none"/></svg>
<div class="a" style="left:247px;top:500px;width:759px;height:17px;background:linear-gradient(#f3f1ea,#fefefb)"></div>
<div class="a" style="left:247px;top:501px;width:16px;height:15px;border:1px solid #fff;border-radius:3px;background:linear-gradient(135deg,#dae5fd 0%,#c5d6fc 45%,#b6c9f6 100%);box-shadow:inset -1px -1px 0 #a9bdee,0 1px 0 #b0c4ee"></div>
<svg class="a" style="left:252px;top:504px;" width="6" height="8" viewBox="0 0 6 8"><path d="M5 0.5l-3.5 3.5 3.5 3.5" stroke="#4d6185" stroke-width="2" fill="none"/></svg>
<div class="a" style="left:623px;top:501px;width:9px;height:15px;border:1px solid #fff;border-radius:3px;background:linear-gradient(135deg,#dae5fd 0%,#c5d6fc 45%,#b6c9f6 100%);box-shadow:inset -1px -1px 0 #a9bdee,0 1px 0 #b0c4ee"></div>
<div class="a" style="left:990px;top:501px;width:16px;height:15px;border:1px solid #fff;border-radius:3px;background:linear-gradient(135deg,#dae5fd 0%,#c5d6fc 45%,#b6c9f6 100%);box-shadow:inset -1px -1px 0 #a9bdee,0 1px 0 #b0c4ee"></div>
<svg class="a" style="left:995px;top:504px;" width="6" height="8" viewBox="0 0 6 8"><path d="M1 0.5l3.5 3.5-3.5 3.5" stroke="#4d6185" stroke-width="2" fill="none"/></svg>
<div class="a" style="left:1006px;top:137px;width:17px;height:363px;background:linear-gradient(90deg,#f3f1ea,#fefefb)"></div>
<div class="a" style="left:1007px;top:139px;width:16px;height:16px;border:1px solid #fff;border-radius:3px;background:linear-gradient(135deg,#dae5fd 0%,#c5d6fc 45%,#b6c9f6 100%);box-shadow:inset -1px -1px 0 #a9bdee,0 1px 0 #b0c4ee"></div>
<svg class="a" style="left:1011px;top:144px;" width="8" height="6" viewBox="0 0 8 6"><path d="M0.5 5l3.5-3.5 3.5 3.5" stroke="#4d6185" stroke-width="2" fill="none"/></svg>
<div class="a" style="left:1007px;top:156px;width:16px;height:60px;border:1px solid #fff;border-radius:3px;background:linear-gradient(135deg,#dae5fd 0%,#c5d6fc 45%,#b6c9f6 100%);box-shadow:inset -1px -1px 0 #a9bdee,0 1px 0 #b0c4ee"></div>
<svg class="a" style="left:1012px;top:182px;" width="7" height="8" viewBox="0 0 7 8"><path d="M0 0.5h7M0 2.5h7M0 4.5h7M0 6.5h7" stroke="#eef3fe"/><path d="M0 1.5h7M0 3.5h7M0 5.5h7M0 7.5h7" stroke="#8da5dc"/></svg>
<div class="a" style="left:1007px;top:484px;width:16px;height:16px;border:1px solid #fff;border-radius:3px;background:linear-gradient(135deg,#dae5fd 0%,#c5d6fc 45%,#b6c9f6 100%);box-shadow:inset -1px -1px 0 #a9bdee,0 1px 0 #b0c4ee"></div>
<svg class="a" style="left:1011px;top:489px;" width="8" height="6" viewBox="0 0 8 6"><path d="M0.5 1l3.5 3.5 3.5-3.5" stroke="#4d6185" stroke-width="2" fill="none"/></svg>
<div class="a" style="left:1006px;top:500px;width:17px;height:17px;background:#ECE9D8"></div>
<div class="a" style="left:1023px;top:137px;width:1px;height:381px;background:#aca899"></div>
<div class="a" style="left:0px;top:517px;width:1024px;height:1px;background:#aca899"></div>
<div class="a" style="left:0px;top:500px;width:1px;height:17px;background:#aca899"></div>
<div class="a" style="left:123px;top:500px;width:1px;height:17px;background:#aca899"></div>
<div class="a" style="left:182px;top:500px;width:1px;height:17px;background:#aca899"></div>
<div class="a" style="left:186px;top:500px;width:1px;height:17px;background:#aca899"></div>
<div class="a" style="left:242px;top:500px;width:1px;height:17px;background:#aca899"></div>
<svg class="a" style="left:3px;top:523px;" width="8" height="8" viewBox="0 0 8 8"><path d="M1 1l6 6M7 1l-6 6" stroke="#000" stroke-width="1.6"/></svg>
<div class="a" style="left:21px;top:521px;width:57px;height:21px;border:1px solid #000;background:#ECE9D8;box-shadow:inset 1px 1px 0 #fff,inset -1px -1px 0 #716f64,inset -2px -2px 0 #aca899"></div>
<div class="t" style="left:21px;top:525px;font-size:12px;color:#000;"><div style="width:57px;text-align:center">設定...</div></div>
<div class="a" style="left:84px;top:521px;width:57px;height:21px;background:#ECE9D8;box-shadow:inset 1px 1px 0 #fff,inset -1px -1px 0 #716f64,inset -2px -2px 0 #aca899"></div>
<div class="t" style="left:84px;top:525px;font-size:12px;color:#000;"><div style="width:57px;text-align:center">刷新</div></div>
<div class="a" style="left:147px;top:521px;width:57px;height:21px;background:#ECE9D8;box-shadow:inset 1px 1px 0 #fff,inset -1px -1px 0 #716f64,inset -2px -2px 0 #aca899"></div>
<div class="t" style="left:147px;top:525px;font-size:12px;color:#000;"><div style="width:57px;text-align:center">匯出...</div></div>
<div class="a" style="left:210px;top:521px;width:124px;height:21px;background:#ECE9D8;box-shadow:inset 1px 1px 0 #fff,inset -1px -1px 0 #716f64,inset -2px -2px 0 #aca899"></div>
<div class="t" style="left:210px;top:525px;font-size:12px;color:#000;"><div style="width:124px;text-align:center">封包與波形同步設定</div></div>
<div class="a" style="left:4px;top:548px;width:1px;height:195px;background:#fff"></div>
<div class="a" style="left:6px;top:548px;width:1px;height:195px;background:#aca899"></div>
<div class="a" style="left:8px;top:548px;width:1px;height:195px;background:#fff"></div>
<div class="a" style="left:9px;top:548px;width:1px;height:195px;background:#aca899"></div>
<div class="a" style="left:17px;top:549px;width:985px;height:194px;background:#fff;border-top:1px solid #8a8a8a;border-left:1px solid #8a8a8a"></div>
<div class="a" style="left:1001px;top:550px;width:19px;height:193px;background:repeating-conic-gradient(#ece9d8 0 25%,#fefefe 0 50%) 0 0/2px 2px"></div>
<div class="a" style="left:1001px;top:550px;width:19px;height:16px;background:#ECE9D8;border-top:1px solid #ECE9D8;border-left:1px solid #ECE9D8;border-right:1px solid #716f64;border-bottom:1px solid #716f64;box-shadow:inset 1px 1px 0 #fff,inset -1px -1px 0 #aca899"></div>
<svg class="a" style="left:1006px;top:555px;" width="9" height="5" viewBox="0 0 9 5"><path d="M0 5h9l-4.5-5z"/></svg>
<div class="a" style="left:1001px;top:566px;width:19px;height:9px;background:#ECE9D8;border-top:1px solid #ECE9D8;border-left:1px solid #ECE9D8;border-right:1px solid #716f64;border-bottom:1px solid #716f64;box-shadow:inset 1px 1px 0 #fff,inset -1px -1px 0 #aca899"></div>
<div class="a" style="left:1001px;top:728px;width:19px;height:16px;background:#ECE9D8;border-top:1px solid #ECE9D8;border-left:1px solid #ECE9D8;border-right:1px solid #716f64;border-bottom:1px solid #716f64;box-shadow:inset 1px 1px 0 #fff,inset -1px -1px 0 #aca899"></div>
<svg class="a" style="left:1006px;top:734px;" width="9" height="5" viewBox="0 0 9 5"><path d="M0 0h9l-4.5 5z"/></svg>
<div class="a" style="left:19px;top:551px;width:195px;height:36px;background:#000"></div>
<div class="a" style="left:20px;top:552px;width:121px;height:16px;background:#3446a0"></div>
<div class="t" style="left:20px;top:552px;width:121px;text-align:center;font-size:15px;color:#fff;-webkit-text-stroke:0;">名稱</div>
<div class="a" style="left:142px;top:552px;width:71px;height:16px;background:#3446a0"></div>
<div class="t" style="left:142px;top:552px;width:71px;text-align:center;font-size:15px;color:#fff;-webkit-text-stroke:0;">起始點</div>
<div class="a" style="left:20px;top:569px;width:121px;height:17px;background:#fff"></div>
<div class="t" style="left:20px;top:570px;width:121px;text-align:center;font-size:14px;color:#000;-webkit-text-stroke:0;letter-spacing:1px;-webkit-text-stroke:0.2px #000">信號濾波間隔棒</div>
<div class="a" style="left:142px;top:569px;width:71px;height:17px;background:#fff"></div>
<div class="t" style="left:142px;top:571px;width:71px;text-align:center;font-size:12px;color:#000;-webkit-text-stroke:0;top:571px">0ns</div>
<div class="a" style="left:216px;top:551px;width:241px;height:36px;background:#000"></div>
<div class="a" style="left:217px;top:552px;width:47px;height:16px;background:#33cc33"></div>
<div class="t" style="left:217px;top:552px;width:47px;text-align:center;font-size:15px;color:#fff;-webkit-text-stroke:0;">資料</div>
<div class="a" style="left:217px;top:569px;width:47px;height:17px;background:#fff"></div>
<div class="t" style="left:217px;top:571px;width:47px;text-align:center;font-size:12px;color:#000;-webkit-text-stroke:0;top:571px">0X5A</div>
<div class="a" style="left:265px;top:552px;width:47px;height:16px;background:#33cc33"></div>
<div class="t" style="left:265px;top:552px;width:47px;text-align:center;font-size:15px;color:#fff;-webkit-text-stroke:0;">資料</div>
<div class="a" style="left:265px;top:569px;width:47px;height:17px;background:#fff"></div>
<div class="t" style="left:265px;top:571px;width:47px;text-align:center;font-size:12px;color:#000;-webkit-text-stroke:0;top:571px">0X5B</div>
<div class="a" style="left:313px;top:552px;width:47px;height:16px;background:#33cc33"></div>
<div class="t" style="left:313px;top:552px;width:47px;text-align:center;font-size:15px;color:#fff;-webkit-text-stroke:0;">資料</div>
<div class="a" style="left:313px;top:569px;width:47px;height:17px;background:#fff"></div>
<div class="t" style="left:313px;top:571px;width:47px;text-align:center;font-size:12px;color:#000;-webkit-text-stroke:0;top:571px">0X5C</div>
<div class="a" style="left:361px;top:552px;width:47px;height:16px;background:#33cc33"></div>
<div class="t" style="left:361px;top:552px;width:47px;text-align:center;font-size:15px;color:#fff;-webkit-text-stroke:0;">資料</div>
<div class="a" style="left:361px;top:569px;width:47px;height:17px;background:#fff"></div>
<div class="t" style="left:361px;top:571px;width:47px;text-align:center;font-size:12px;color:#000;-webkit-text-stroke:0;top:571px">0X5D</div>
<div class="a" style="left:409px;top:552px;width:47px;height:16px;background:#33cc33"></div>
<div class="t" style="left:409px;top:552px;width:47px;text-align:center;font-size:15px;color:#fff;-webkit-text-stroke:0;">資料</div>
<div class="a" style="left:409px;top:569px;width:47px;height:17px;background:#fff"></div>
<div class="t" style="left:409px;top:571px;width:47px;text-align:center;font-size:12px;color:#000;-webkit-text-stroke:0;top:571px">0X5E</div>
<div class="a" style="left:459px;top:551px;width:49px;height:36px;background:#000"></div>
<div class="a" style="left:460px;top:552px;width:47px;height:16px;background:#6ab8d4"></div>
<div class="t" style="left:460px;top:552px;width:47px;text-align:center;font-size:15px;color:#fff;-webkit-text-stroke:0;">長度</div>
<div class="a" style="left:460px;top:569px;width:47px;height:17px;background:#fff"></div>
<div class="t" style="left:460px;top:571px;width:47px;text-align:center;font-size:12px;color:#000;-webkit-text-stroke:0;top:571px">11us</div>
<div class="a" style="left:19px;top:589px;width:195px;height:36px;background:#000"></div>
<div class="a" style="left:20px;top:590px;width:121px;height:16px;background:#3446a0"></div>
<div class="t" style="left:20px;top:590px;width:121px;text-align:center;font-size:15px;color:#fff;-webkit-text-stroke:0;">名稱</div>
<div class="a" style="left:142px;top:590px;width:71px;height:16px;background:#3446a0"></div>
<div class="t" style="left:142px;top:590px;width:71px;text-align:center;font-size:15px;color:#fff;-webkit-text-stroke:0;">起始點</div>
<div class="a" style="left:20px;top:607px;width:121px;height:17px;background:#fff"></div>
<div class="t" style="left:20px;top:608px;width:121px;text-align:center;font-size:14px;color:#000;-webkit-text-stroke:0;letter-spacing:1px;-webkit-text-stroke:0.2px #000">信號濾波間隔棒</div>
<div class="a" style="left:142px;top:607px;width:71px;height:17px;background:#fff"></div>
<div class="t" style="left:142px;top:609px;width:71px;text-align:center;font-size:12px;color:#000;-webkit-text-stroke:0;top:609px">11us</div>
<div class="a" style="left:216px;top:589px;width:241px;height:36px;background:#000"></div>
<div class="a" style="left:217px;top:590px;width:47px;height:16px;background:#33cc33"></div>
<div class="t" style="left:217px;top:590px;width:47px;text-align:center;font-size:15px;color:#fff;-webkit-text-stroke:0;">資料</div>
<div class="a" style="left:217px;top:607px;width:47px;height:17px;background:#fff"></div>
<div class="t" style="left:217px;top:609px;width:47px;text-align:center;font-size:12px;color:#000;-webkit-text-stroke:0;top:609px">0X5A</div>
<div class="a" style="left:265px;top:590px;width:47px;height:16px;background:#33cc33"></div>
<div class="t" style="left:265px;top:590px;width:47px;text-align:center;font-size:15px;color:#fff;-webkit-text-stroke:0;">資料</div>
<div class="a" style="left:265px;top:607px;width:47px;height:17px;background:#fff"></div>
<div class="t" style="left:265px;top:609px;width:47px;text-align:center;font-size:12px;color:#000;-webkit-text-stroke:0;top:609px">0X5B</div>
<div class="a" style="left:313px;top:590px;width:47px;height:16px;background:#33cc33"></div>
<div class="t" style="left:313px;top:590px;width:47px;text-align:center;font-size:15px;color:#fff;-webkit-text-stroke:0;">資料</div>
<div class="a" style="left:313px;top:607px;width:47px;height:17px;background:#fff"></div>
<div class="t" style="left:313px;top:609px;width:47px;text-align:center;font-size:12px;color:#000;-webkit-text-stroke:0;top:609px">0X5C</div>
<div class="a" style="left:361px;top:590px;width:47px;height:16px;background:#33cc33"></div>
<div class="t" style="left:361px;top:590px;width:47px;text-align:center;font-size:15px;color:#fff;-webkit-text-stroke:0;">資料</div>
<div class="a" style="left:361px;top:607px;width:47px;height:17px;background:#fff"></div>
<div class="t" style="left:361px;top:609px;width:47px;text-align:center;font-size:12px;color:#000;-webkit-text-stroke:0;top:609px">0X5D</div>
<div class="a" style="left:409px;top:590px;width:47px;height:16px;background:#33cc33"></div>
<div class="t" style="left:409px;top:590px;width:47px;text-align:center;font-size:15px;color:#fff;-webkit-text-stroke:0;">資料</div>
<div class="a" style="left:409px;top:607px;width:47px;height:17px;background:#fff"></div>
<div class="t" style="left:409px;top:609px;width:47px;text-align:center;font-size:12px;color:#000;-webkit-text-stroke:0;top:609px">0X5E</div>
<div class="a" style="left:459px;top:589px;width:49px;height:36px;background:#000"></div>
<div class="a" style="left:460px;top:590px;width:47px;height:16px;background:#6ab8d4"></div>
<div class="t" style="left:460px;top:590px;width:47px;text-align:center;font-size:15px;color:#fff;-webkit-text-stroke:0;">長度</div>
<div class="a" style="left:460px;top:607px;width:47px;height:17px;background:#fff"></div>
<div class="t" style="left:460px;top:609px;width:47px;text-align:center;font-size:12px;color:#000;-webkit-text-stroke:0;top:609px">11us</div>
<div class="a" style="left:19px;top:627px;width:195px;height:36px;background:#000"></div>
<div class="a" style="left:20px;top:628px;width:121px;height:16px;background:#3446a0"></div>
<div class="t" style="left:20px;top:628px;width:121px;text-align:center;font-size:15px;color:#fff;-webkit-text-stroke:0;">名稱</div>
<div class="a" style="left:142px;top:628px;width:71px;height:16px;background:#3446a0"></div>
<div class="t" style="left:142px;top:628px;width:71px;text-align:center;font-size:15px;color:#fff;-webkit-text-stroke:0;">起始點</div>
<div class="a" style="left:20px;top:645px;width:121px;height:17px;background:#fff"></div>
<div class="t" style="left:20px;top:646px;width:121px;text-align:center;font-size:14px;color:#000;-webkit-text-stroke:0;letter-spacing:1px;-webkit-text-stroke:0.2px #000">信號濾波間隔棒</div>
<div class="a" style="left:142px;top:645px;width:71px;height:17px;background:#fff"></div>
<div class="t" style="left:142px;top:647px;width:71px;text-align:center;font-size:12px;color:#000;-webkit-text-stroke:0;top:647px">22us</div>
<div class="a" style="left:216px;top:627px;width:241px;height:36px;background:#000"></div>
<div class="a" style="left:217px;top:628px;width:47px;height:16px;background:#33cc33"></div>
<div class="t" style="left:217px;top:628px;width:47px;text-align:center;font-size:15px;color:#fff;-webkit-text-stroke:0;">資料</div>
<div class="a" style="left:217px;top:645px;width:47px;height:17px;background:#fff"></div>
<div class="t" style="left:217px;top:647px;width:47px;text-align:center;font-size:12px;color:#000;-webkit-text-stroke:0;top:647px">0X5A</div>
<div class="a" style="left:265px;top:628px;width:47px;height:16px;background:#33cc33"></div>
<div class="t" style="left:265px;top:628px;width:47px;text-align:center;font-size:15px;color:#fff;-webkit-text-stroke:0;">資料</div>
<div class="a" style="left:265px;top:645px;width:47px;height:17px;background:#fff"></div>
<div class="t" style="left:265px;top:647px;width:47px;text-align:center;font-size:12px;color:#000;-webkit-text-stroke:0;top:647px">0X5B</div>
<div class="a" style="left:313px;top:628px;width:47px;height:16px;background:#33cc33"></div>
<div class="t" style="left:313px;top:628px;width:47px;text-align:center;font-size:15px;color:#fff;-webkit-text-stroke:0;">資料</div>
<div class="a" style="left:313px;top:645px;width:47px;height:17px;background:#fff"></div>
<div class="t" style="left:313px;top:647px;width:47px;text-align:center;font-size:12px;color:#000;-webkit-text-stroke:0;top:647px">0X5C</div>
<div class="a" style="left:361px;top:628px;width:47px;height:16px;background:#33cc33"></div>
<div class="t" style="left:361px;top:628px;width:47px;text-align:center;font-size:15px;color:#fff;-webkit-text-stroke:0;">資料</div>
<div class="a" style="left:361px;top:645px;width:47px;height:17px;background:#fff"></div>
<div class="t" style="left:361px;top:647px;width:47px;text-align:center;font-size:12px;color:#000;-webkit-text-stroke:0;top:647px">0X5D</div>
<div class="a" style="left:409px;top:628px;width:47px;height:16px;background:#33cc33"></div>
<div class="t" style="left:409px;top:628px;width:47px;text-align:center;font-size:15px;color:#fff;-webkit-text-stroke:0;">資料</div>
<div class="a" style="left:409px;top:645px;width:47px;height:17px;background:#fff"></div>
<div class="t" style="left:409px;top:647px;width:47px;text-align:center;font-size:12px;color:#000;-webkit-text-stroke:0;top:647px">0X5E</div>
<div class="a" style="left:459px;top:627px;width:49px;height:36px;background:#000"></div>
<div class="a" style="left:460px;top:628px;width:47px;height:16px;background:#6ab8d4"></div>
<div class="t" style="left:460px;top:628px;width:47px;text-align:center;font-size:15px;color:#fff;-webkit-text-stroke:0;">長度</div>
<div class="a" style="left:460px;top:645px;width:47px;height:17px;background:#fff"></div>
<div class="t" style="left:460px;top:647px;width:47px;text-align:center;font-size:12px;color:#000;-webkit-text-stroke:0;top:647px">11us</div>
<div class="a" style="left:19px;top:665px;width:195px;height:36px;background:#000"></div>
<div class="a" style="left:20px;top:666px;width:121px;height:16px;background:#3446a0"></div>
<div class="t" style="left:20px;top:666px;width:121px;text-align:center;font-size:15px;color:#fff;-webkit-text-stroke:0;">名稱</div>
<div class="a" style="left:142px;top:666px;width:71px;height:16px;background:#3446a0"></div>
<div class="t" style="left:142px;top:666px;width:71px;text-align:center;font-size:15px;color:#fff;-webkit-text-stroke:0;">起始點</div>
<div class="a" style="left:20px;top:683px;width:121px;height:17px;background:#fff"></div>
<div class="t" style="left:20px;top:684px;width:121px;text-align:center;font-size:14px;color:#000;-webkit-text-stroke:0;letter-spacing:1px;-webkit-text-stroke:0.2px #000">信號濾波間隔棒</div>
<div class="a" style="left:142px;top:683px;width:71px;height:17px;background:#fff"></div>
<div class="t" style="left:142px;top:685px;width:71px;text-align:center;font-size:12px;color:#000;-webkit-text-stroke:0;top:685px">33us</div>
<div class="a" style="left:216px;top:665px;width:241px;height:36px;background:#000"></div>
<div class="a" style="left:217px;top:666px;width:47px;height:16px;background:#33cc33"></div>
<div class="t" style="left:217px;top:666px;width:47px;text-align:center;font-size:15px;color:#fff;-webkit-text-stroke:0;">資料</div>
<div class="a" style="left:217px;top:683px;width:47px;height:17px;background:#fff"></div>
<div class="t" style="left:217px;top:685px;width:47px;text-align:center;font-size:12px;color:#000;-webkit-text-stroke:0;top:685px">0X5A</div>
<div class="a" style="left:265px;top:666px;width:47px;height:16px;background:#33cc33"></div>
<div class="t" style="left:265px;top:666px;width:47px;text-align:center;font-size:15px;color:#fff;-webkit-text-stroke:0;">資料</div>
<div class="a" style="left:265px;top:683px;width:47px;height:17px;background:#fff"></div>
<div class="t" style="left:265px;top:685px;width:47px;text-align:center;font-size:12px;color:#000;-webkit-text-stroke:0;top:685px">0X5B</div>
<div class="a" style="left:313px;top:666px;width:47px;height:16px;background:#33cc33"></div>
<div class="t" style="left:313px;top:666px;width:47px;text-align:center;font-size:15px;color:#fff;-webkit-text-stroke:0;">資料</div>
<div class="a" style="left:313px;top:683px;width:47px;height:17px;background:#fff"></div>
<div class="t" style="left:313px;top:685px;width:47px;text-align:center;font-size:12px;color:#000;-webkit-text-stroke:0;top:685px">0X5C</div>
<div class="a" style="left:361px;top:666px;width:47px;height:16px;background:#33cc33"></div>
<div class="t" style="left:361px;top:666px;width:47px;text-align:center;font-size:15px;color:#fff;-webkit-text-stroke:0;">資料</div>
<div class="a" style="left:361px;top:683px;width:47px;height:17px;background:#fff"></div>
<div class="t" style="left:361px;top:685px;width:47px;text-align:center;font-size:12px;color:#000;-webkit-text-stroke:0;top:685px">0X5D</div>
<div class="a" style="left:409px;top:666px;width:47px;height:16px;background:#33cc33"></div>
<div class="t" style="left:409px;top:666px;width:47px;text-align:center;font-size:15px;color:#fff;-webkit-text-stroke:0;">資料</div>
<div class="a" style="left:409px;top:683px;width:47px;height:17px;background:#fff"></div>
<div class="t" style="left:409px;top:685px;width:47px;text-align:center;font-size:12px;color:#000;-webkit-text-stroke:0;top:685px">0X5E</div>
<div class="a" style="left:459px;top:665px;width:49px;height:36px;background:#000"></div>
<div class="a" style="left:460px;top:666px;width:47px;height:16px;background:#6ab8d4"></div>
<div class="t" style="left:460px;top:666px;width:47px;text-align:center;font-size:15px;color:#fff;-webkit-text-stroke:0;">長度</div>
<div class="a" style="left:460px;top:683px;width:47px;height:17px;background:#fff"></div>
<div class="t" style="left:460px;top:685px;width:47px;text-align:center;font-size:12px;color:#000;-webkit-text-stroke:0;top:685px">11us</div>
<div class="a" style="left:19px;top:703px;width:195px;height:36px;background:#000"></div>
<div class="a" style="left:20px;top:704px;width:121px;height:16px;background:#3446a0"></div>
<div class="t" style="left:20px;top:704px;width:121px;text-align:center;font-size:15px;color:#fff;-webkit-text-stroke:0;">名稱</div>
<div class="a" style="left:142px;top:704px;width:71px;height:16px;background:#3446a0"></div>
<div class="t" style="left:142px;top:704px;width:71px;text-align:center;font-size:15px;color:#fff;-webkit-text-stroke:0;">起始點</div>
<div class="a" style="left:20px;top:721px;width:121px;height:17px;background:#fff"></div>
<div class="t" style="left:20px;top:722px;width:121px;text-align:center;font-size:14px;color:#000;-webkit-text-stroke:0;letter-spacing:1px;-webkit-text-stroke:0.2px #000">信號濾波間隔棒</div>
<div class="a" style="left:142px;top:721px;width:71px;height:17px;background:#fff"></div>
<div class="t" style="left:142px;top:723px;width:71px;text-align:center;font-size:12px;color:#000;-webkit-text-stroke:0;top:723px">44us</div>
<div class="a" style="left:216px;top:703px;width:289px;height:36px;background:#000"></div>
<div class="a" style="left:217px;top:704px;width:47px;height:16px;background:#33cc33"></div>
<div class="t" style="left:217px;top:704px;width:47px;text-align:center;font-size:15px;color:#fff;-webkit-text-stroke:0;">資料</div>
<div class="a" style="left:217px;top:721px;width:47px;height:17px;background:#fff"></div>
<div class="t" style="left:217px;top:723px;width:47px;text-align:center;font-size:12px;color:#000;-webkit-text-stroke:0;top:723px">0X5A</div>
<div class="a" style="left:265px;top:704px;width:47px;height:16px;background:#33cc33"></div>
<div class="t" style="left:265px;top:704px;width:47px;text-align:center;font-size:15px;color:#fff;-webkit-text-stroke:0;">資料</div>
<div class="a" style="left:265px;top:721px;width:47px;height:17px;background:#fff"></div>
<div class="t" style="left:265px;top:723px;width:47px;text-align:center;font-size:12px;color:#000;-webkit-text-stroke:0;top:723px">0X5B</div>
<div class="a" style="left:313px;top:704px;width:47px;height:16px;background:#33cc33"></div>
<div class="t" style="left:313px;top:704px;width:47px;text-align:center;font-size:15px;color:#fff;-webkit-text-stroke:0;">資料</div>
<div class="a" style="left:313px;top:721px;width:47px;height:17px;background:#fff"></div>
<div class="t" style="left:313px;top:723px;width:47px;text-align:center;font-size:12px;color:#000;-webkit-text-stroke:0;top:723px">0X58</div>
<div class="a" style="left:361px;top:704px;width:47px;height:16px;background:#33cc33"></div>
<div class="t" style="left:361px;top:704px;width:47px;text-align:center;font-size:15px;color:#fff;-webkit-text-stroke:0;">資料</div>
<div class="a" style="left:361px;top:721px;width:47px;height:17px;background:#fff"></div>
<div class="t" style="left:361px;top:723px;width:47px;text-align:center;font-size:12px;color:#000;-webkit-text-stroke:0;top:723px">0X5C</div>
<div class="a" style="left:409px;top:704px;width:47px;height:16px;background:#33cc33"></div>
<div class="t" style="left:409px;top:704px;width:47px;text-align:center;font-size:15px;color:#fff;-webkit-text-stroke:0;">資料</div>
<div class="a" style="left:409px;top:721px;width:47px;height:17px;background:#fff"></div>
<div class="t" style="left:409px;top:723px;width:47px;text-align:center;font-size:12px;color:#000;-webkit-text-stroke:0;top:723px">0X5D</div>
<div class="a" style="left:457px;top:704px;width:47px;height:16px;background:#33cc33"></div>
<div class="t" style="left:457px;top:704px;width:47px;text-align:center;font-size:15px;color:#fff;-webkit-text-stroke:0;">資料</div>
<div class="a" style="left:457px;top:721px;width:47px;height:17px;background:#fff"></div>
<div class="t" style="left:457px;top:723px;width:47px;text-align:center;font-size:12px;color:#000;-webkit-text-stroke:0;top:723px">0X5E</div>
<div class="a" style="left:507px;top:703px;width:49px;height:36px;background:#000"></div>
<div class="a" style="left:508px;top:704px;width:47px;height:16px;background:#6ab8d4"></div>
<div class="t" style="left:508px;top:704px;width:47px;text-align:center;font-size:15px;color:#fff;-webkit-text-stroke:0;">長度</div>
<div class="a" style="left:508px;top:721px;width:47px;height:17px;background:#fff"></div>
<div class="t" style="left:508px;top:723px;width:47px;text-align:center;font-size:12px;color:#000;-webkit-text-stroke:0;top:723px">11us</div>
<div class="a" style="left:19px;top:635px;width:8px;height:17px;background:transparent"></div>
<svg class="a" style="left:19px;top:636px;" width="8" height="16" viewBox="0 0 8 16"><path d="M0 0l8 8-8 8z" fill="#ff0000"/></svg>
<div class="a" style="left:0px;top:748px;width:1024px;height:1px;background:#aca899"></div>
<div class="a" style="left:0px;top:749px;width:1024px;height:1px;background:#fff"></div>
<div class="t" style="left:2px;top:753px;font-size:12px;color:#000;">就緒</div>
<div class="a" style="left:867px;top:752px;width:1px;height:14px;background:#aca899"></div>
<div class="a" style="left:870px;top:752px;width:66px;height:14px;border-top:1px solid #aca899;border-left:1px solid #aca899;border-right:1px solid #fff"></div>
<div class="t" style="left:872px;top:753px;font-size:12px;color:#000;">停止!</div>
<div class="a" style="left:938px;top:752px;width:86px;height:14px;border-top:1px solid #aca899;border-left:1px solid #aca899"></div>
<div class="t" style="left:940px;top:753px;font-size:12px;color:#000;">一般模式</div>
<div class="a" style="left:0px;top:766px;width:1024px;height:2px;background:#3a6ed8"></div>
</body></html>
